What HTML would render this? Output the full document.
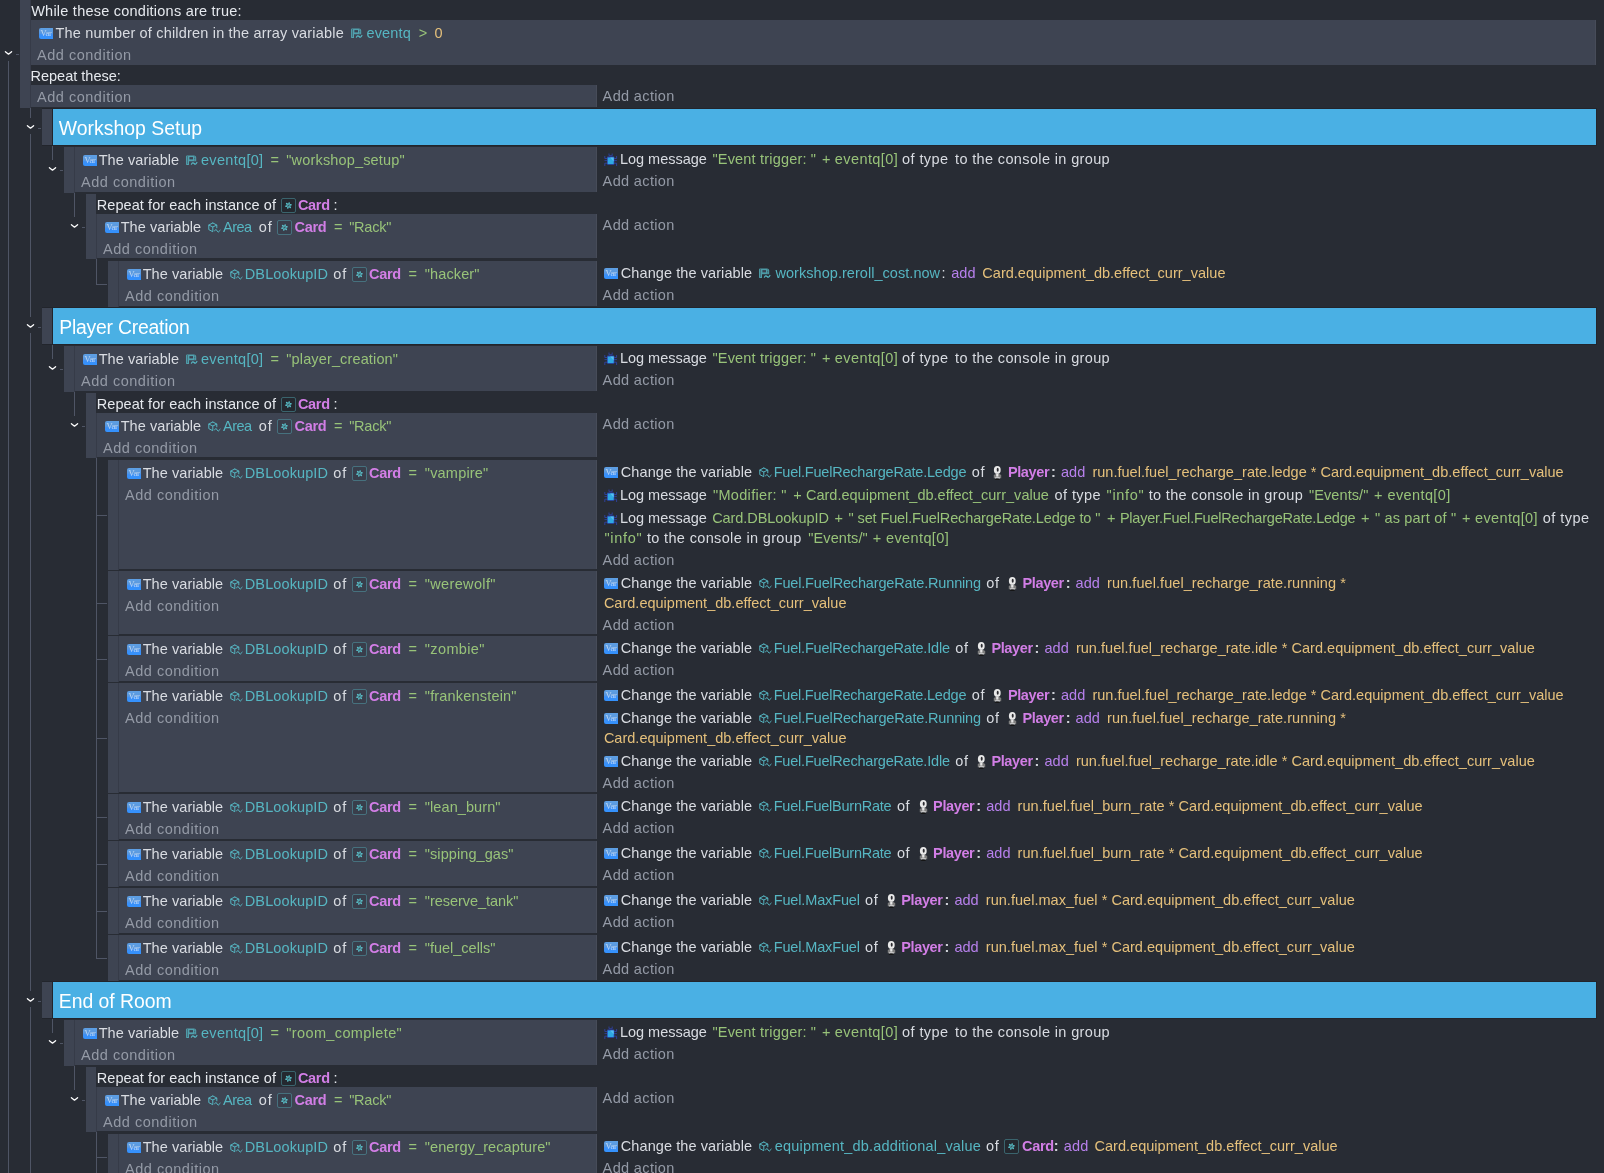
<!DOCTYPE html>
<html lang="en"><head><meta charset="utf-8"><title>Events sheet</title>
<style>
html,body{margin:0;padding:0;background:#282c34;}
#root{will-change:transform;position:relative;width:1604px;height:1173px;overflow:hidden;background:#282c34;font-family:"Liberation Sans", sans-serif;}
#root div{position:absolute;}
.x{position:absolute;white-space:pre;line-height:20px;font-size:14.5px;}
.i{position:absolute;display:block;}
.t{color:#d9dce2;} .tb{color:#cfd2d8;font-weight:700;} .hd{color:#e6e9ee;} .add{color:#949aa6;} .v{color:#56b6c2;}
.s,.o{color:#98c379;} .n{color:#e5c07b;} .op{color:#b780ec;} .obj{color:#d27ee6;font-weight:700;}
.grp{color:#fff;font-size:19.4px;line-height:26px;}
.ivar{position:absolute;width:14px;height:11px;border-radius:2px 0 0 2px;background:linear-gradient(#5d9fe4 0%,#5a98de 45%,#3b8ff6 62%,#3392ff 100%);color:rgba(255,255,255,.62);font:400 8.5px/10px "Liberation Serif",serif;text-align:center;letter-spacing:-0.3px;overflow:hidden;}
</style></head>
<body><div id="root">
<div style="left:20px;top:0px;width:10px;height:108px;background:#3e4452;"></div>
<div style="left:30px;top:0px;width:1px;height:108px;background:#363b48;"></div>
<div style="left:31px;top:20px;width:1565px;height:45px;background:#3e4452;"></div>
<div style="left:1595px;top:20px;width:1px;height:45px;background:#474c59;"></div>
<div style="left:31px;top:85px;width:566px;height:22px;background:#3e4452;"></div>
<div style="left:596px;top:85px;width:1px;height:22px;background:#474c59;"></div>
<div style="left:8px;top:44px;width:1px;height:16px;background:#282c34;"></div>
<div style="left:16px;top:54px;width:3px;height:1px;background:#4f5565;"></div>
<div style="left:8px;top:61px;width:1px;height:1112px;background:#4f5565;"></div>
<div style="left:30px;top:108px;width:1px;height:1065px;background:#4f5565;"></div>
<div style="left:42px;top:109px;width:10px;height:36px;background:#3e4452;"></div>
<div style="left:42px;top:108px;width:1555px;height:38px;background:#22252c;"></div>
<div style="left:42px;top:109px;width:10px;height:36px;background:#3e4452;"></div>
<div style="left:53px;top:109px;width:1543px;height:36px;background:#4ab0e4;"></div>
<div style="left:30px;top:118px;width:1px;height:16px;background:#282c34;"></div>
<div style="left:38px;top:128px;width:3px;height:1px;background:#4f5565;"></div>
<div style="left:52px;top:146px;width:1px;height:15px;background:#4f5565;"></div>
<div style="left:64px;top:147px;width:10px;height:46px;background:#3e4452;"></div>
<div style="left:75px;top:147px;width:522px;height:45px;background:#3e4452;"></div>
<div style="left:596px;top:147px;width:1px;height:45px;background:#474c59;"></div>
<div style="left:74px;top:147px;width:1px;height:46px;background:#363b48;"></div>
<div style="left:52px;top:160px;width:1px;height:16px;background:#282c34;"></div>
<div style="left:60px;top:170px;width:3px;height:1px;background:#4f5565;"></div>
<div style="left:74px;top:193px;width:1px;height:26px;background:#4f5565;"></div>
<div style="left:86px;top:194px;width:10px;height:65px;background:#3e4452;"></div>
<div style="left:96px;top:214px;width:1px;height:45px;background:#363b48;"></div>
<div style="left:97px;top:214px;width:500px;height:44px;background:#3e4452;"></div>
<div style="left:596px;top:214px;width:1px;height:44px;background:#474c59;"></div>
<div style="left:74px;top:217px;width:1px;height:16px;background:#282c34;"></div>
<div style="left:82px;top:227px;width:3px;height:1px;background:#4f5565;"></div>
<div style="left:96px;top:259px;width:1px;height:26px;background:#4f5565;"></div>
<div style="left:96px;top:284px;width:11px;height:1px;background:#4f5565;"></div>
<div style="left:108px;top:261px;width:10px;height:46px;background:#3e4452;"></div>
<div style="left:119px;top:261px;width:478px;height:45px;background:#3e4452;"></div>
<div style="left:596px;top:261px;width:1px;height:45px;background:#474c59;"></div>
<div style="left:118px;top:261px;width:1px;height:46px;background:#363b48;"></div>
<div style="left:42px;top:308px;width:10px;height:36px;background:#3e4452;"></div>
<div style="left:42px;top:307px;width:1555px;height:38px;background:#22252c;"></div>
<div style="left:42px;top:308px;width:10px;height:36px;background:#3e4452;"></div>
<div style="left:53px;top:308px;width:1543px;height:36px;background:#4ab0e4;"></div>
<div style="left:30px;top:317px;width:1px;height:16px;background:#282c34;"></div>
<div style="left:38px;top:327px;width:3px;height:1px;background:#4f5565;"></div>
<div style="left:52px;top:345px;width:1px;height:15px;background:#4f5565;"></div>
<div style="left:64px;top:346px;width:10px;height:46px;background:#3e4452;"></div>
<div style="left:75px;top:346px;width:522px;height:45px;background:#3e4452;"></div>
<div style="left:596px;top:346px;width:1px;height:45px;background:#474c59;"></div>
<div style="left:74px;top:346px;width:1px;height:46px;background:#363b48;"></div>
<div style="left:52px;top:359px;width:1px;height:16px;background:#282c34;"></div>
<div style="left:60px;top:369px;width:3px;height:1px;background:#4f5565;"></div>
<div style="left:74px;top:392px;width:1px;height:26px;background:#4f5565;"></div>
<div style="left:86px;top:393px;width:10px;height:65px;background:#3e4452;"></div>
<div style="left:96px;top:413px;width:1px;height:45px;background:#363b48;"></div>
<div style="left:97px;top:413px;width:500px;height:44px;background:#3e4452;"></div>
<div style="left:596px;top:413px;width:1px;height:44px;background:#474c59;"></div>
<div style="left:74px;top:416px;width:1px;height:16px;background:#282c34;"></div>
<div style="left:82px;top:426px;width:3px;height:1px;background:#4f5565;"></div>
<div style="left:108px;top:460px;width:10px;height:110px;background:#3e4452;"></div>
<div style="left:119px;top:460px;width:478px;height:109px;background:#3e4452;"></div>
<div style="left:596px;top:460px;width:1px;height:109px;background:#474c59;"></div>
<div style="left:118px;top:460px;width:1px;height:110px;background:#363b48;"></div>
<div style="left:96px;top:515px;width:11px;height:1px;background:#4f5565;"></div>
<div style="left:108px;top:571px;width:10px;height:64px;background:#3e4452;"></div>
<div style="left:119px;top:571px;width:478px;height:63px;background:#3e4452;"></div>
<div style="left:596px;top:571px;width:1px;height:63px;background:#474c59;"></div>
<div style="left:118px;top:571px;width:1px;height:64px;background:#363b48;"></div>
<div style="left:96px;top:603px;width:11px;height:1px;background:#4f5565;"></div>
<div style="left:108px;top:636px;width:10px;height:46px;background:#3e4452;"></div>
<div style="left:119px;top:636px;width:478px;height:45px;background:#3e4452;"></div>
<div style="left:596px;top:636px;width:1px;height:45px;background:#474c59;"></div>
<div style="left:118px;top:636px;width:1px;height:46px;background:#363b48;"></div>
<div style="left:96px;top:659px;width:11px;height:1px;background:#4f5565;"></div>
<div style="left:108px;top:683px;width:10px;height:110px;background:#3e4452;"></div>
<div style="left:119px;top:683px;width:478px;height:109px;background:#3e4452;"></div>
<div style="left:596px;top:683px;width:1px;height:109px;background:#474c59;"></div>
<div style="left:118px;top:683px;width:1px;height:110px;background:#363b48;"></div>
<div style="left:96px;top:738px;width:11px;height:1px;background:#4f5565;"></div>
<div style="left:108px;top:794px;width:10px;height:46px;background:#3e4452;"></div>
<div style="left:119px;top:794px;width:478px;height:45px;background:#3e4452;"></div>
<div style="left:596px;top:794px;width:1px;height:45px;background:#474c59;"></div>
<div style="left:118px;top:794px;width:1px;height:46px;background:#363b48;"></div>
<div style="left:96px;top:817px;width:11px;height:1px;background:#4f5565;"></div>
<div style="left:108px;top:841px;width:10px;height:46px;background:#3e4452;"></div>
<div style="left:119px;top:841px;width:478px;height:45px;background:#3e4452;"></div>
<div style="left:596px;top:841px;width:1px;height:45px;background:#474c59;"></div>
<div style="left:118px;top:841px;width:1px;height:46px;background:#363b48;"></div>
<div style="left:96px;top:864px;width:11px;height:1px;background:#4f5565;"></div>
<div style="left:108px;top:888px;width:10px;height:46px;background:#3e4452;"></div>
<div style="left:119px;top:888px;width:478px;height:45px;background:#3e4452;"></div>
<div style="left:596px;top:888px;width:1px;height:45px;background:#474c59;"></div>
<div style="left:118px;top:888px;width:1px;height:46px;background:#363b48;"></div>
<div style="left:96px;top:911px;width:11px;height:1px;background:#4f5565;"></div>
<div style="left:108px;top:935px;width:10px;height:46px;background:#3e4452;"></div>
<div style="left:119px;top:935px;width:478px;height:45px;background:#3e4452;"></div>
<div style="left:596px;top:935px;width:1px;height:45px;background:#474c59;"></div>
<div style="left:118px;top:935px;width:1px;height:46px;background:#363b48;"></div>
<div style="left:96px;top:958px;width:11px;height:1px;background:#4f5565;"></div>
<div style="left:96px;top:458px;width:1px;height:500px;background:#4f5565;"></div>
<div style="left:42px;top:982px;width:10px;height:36px;background:#3e4452;"></div>
<div style="left:42px;top:981px;width:1555px;height:38px;background:#22252c;"></div>
<div style="left:42px;top:982px;width:10px;height:36px;background:#3e4452;"></div>
<div style="left:53px;top:982px;width:1543px;height:36px;background:#4ab0e4;"></div>
<div style="left:30px;top:991px;width:1px;height:16px;background:#282c34;"></div>
<div style="left:38px;top:1001px;width:3px;height:1px;background:#4f5565;"></div>
<div style="left:52px;top:1019px;width:1px;height:15px;background:#4f5565;"></div>
<div style="left:64px;top:1020px;width:10px;height:46px;background:#3e4452;"></div>
<div style="left:75px;top:1020px;width:522px;height:45px;background:#3e4452;"></div>
<div style="left:596px;top:1020px;width:1px;height:45px;background:#474c59;"></div>
<div style="left:74px;top:1020px;width:1px;height:46px;background:#363b48;"></div>
<div style="left:52px;top:1033px;width:1px;height:16px;background:#282c34;"></div>
<div style="left:60px;top:1043px;width:3px;height:1px;background:#4f5565;"></div>
<div style="left:74px;top:1066px;width:1px;height:26px;background:#4f5565;"></div>
<div style="left:86px;top:1067px;width:10px;height:65px;background:#3e4452;"></div>
<div style="left:96px;top:1087px;width:1px;height:45px;background:#363b48;"></div>
<div style="left:97px;top:1087px;width:500px;height:44px;background:#3e4452;"></div>
<div style="left:596px;top:1087px;width:1px;height:44px;background:#474c59;"></div>
<div style="left:74px;top:1090px;width:1px;height:16px;background:#282c34;"></div>
<div style="left:82px;top:1100px;width:3px;height:1px;background:#4f5565;"></div>
<div style="left:108px;top:1134px;width:10px;height:46px;background:#3e4452;"></div>
<div style="left:119px;top:1134px;width:478px;height:45px;background:#3e4452;"></div>
<div style="left:596px;top:1134px;width:1px;height:45px;background:#474c59;"></div>
<div style="left:118px;top:1134px;width:1px;height:46px;background:#363b48;"></div>
<div style="left:96px;top:1132px;width:1px;height:60px;background:#4f5565;"></div>
<div style="left:96px;top:1157px;width:11px;height:1px;background:#4f5565;"></div>
<span class="ivar" style="left:39px;top:28px">Var</span>
<svg class="i" style="left:351px;top:27.5px" width="12" height="11" viewBox="0 0 12 11"><path d="M1.2 0.4h6.8a2.2 2.2 0 0 1 2.2 2.2v3.6h-7.2v3.9h-1.8a1.2 1.2 0 0 1-1.2-1.2v-7.3a1.2 1.2 0 0 1 1.2-1.2z" fill="#56b6c2" opacity="0.82"/><rect x="3.4" y="2.1" width="3.6" height="2.3" fill="#3a4150"/><rect x="0.9" y="1.5" width="1" height="1" fill="#353b49"/><rect x="0.9" y="3.5" width="1" height="1" fill="#353b49"/><rect x="0.9" y="5.5" width="1" height="1" fill="#353b49"/><rect x="0.9" y="7.5" width="1" height="1" fill="#353b49"/><rect x="8.3" y="1.6" width="0.9" height="0.8" fill="#3a4150"/><rect x="8.3" y="3.2" width="0.9" height="0.8" fill="#3a4150"/><rect x="8.3" y="4.6" width="0.9" height="0.8" fill="#3a4150"/><path d="M5.4 9.2 q1.3-2.4 2.7-0.7 t2.8-1.0" fill="none" stroke="#56b6c2" stroke-width="1.2" stroke-linecap="round"/></svg>
<svg class="i" style="left:2.5999999999999996px;top:49.1px" width="11" height="8" viewBox="0 0 11 8"><path d="M2.4 2.7 L5.5 5.2 L8.6 2.7" fill="none" stroke="#fff" stroke-width="1.3" stroke-linecap="round" stroke-linejoin="round"/></svg>
<svg class="i" style="left:24.6px;top:123.1px" width="11" height="8" viewBox="0 0 11 8"><path d="M2.4 2.7 L5.5 5.2 L8.6 2.7" fill="none" stroke="#fff" stroke-width="1.3" stroke-linecap="round" stroke-linejoin="round"/></svg>
<span class="ivar" style="left:83px;top:155px">Var</span>
<svg class="i" style="left:185.8px;top:154.5px" width="12" height="11" viewBox="0 0 12 11"><path d="M1.2 0.4h6.8a2.2 2.2 0 0 1 2.2 2.2v3.6h-7.2v3.9h-1.8a1.2 1.2 0 0 1-1.2-1.2v-7.3a1.2 1.2 0 0 1 1.2-1.2z" fill="#56b6c2" opacity="0.82"/><rect x="3.4" y="2.1" width="3.6" height="2.3" fill="#3a4150"/><rect x="0.9" y="1.5" width="1" height="1" fill="#353b49"/><rect x="0.9" y="3.5" width="1" height="1" fill="#353b49"/><rect x="0.9" y="5.5" width="1" height="1" fill="#353b49"/><rect x="0.9" y="7.5" width="1" height="1" fill="#353b49"/><rect x="8.3" y="1.6" width="0.9" height="0.8" fill="#3a4150"/><rect x="8.3" y="3.2" width="0.9" height="0.8" fill="#3a4150"/><rect x="8.3" y="4.6" width="0.9" height="0.8" fill="#3a4150"/><path d="M5.4 9.2 q1.3-2.4 2.7-0.7 t2.8-1.0" fill="none" stroke="#56b6c2" stroke-width="1.2" stroke-linecap="round"/></svg>
<svg class="i" style="left:604px;top:153px" width="14" height="14" viewBox="0 0 14 14"><path d="M5 0.5v2.2h3.2V0.5 M0.8 3v2.5h2.6 M12.6 3v2.5h-2.6 M0.5 7.6h3 M12.9 7.6h-3 M0.8 13v-2.8h2.6 M12.6 13v-2.8h-2.6" fill="none" stroke="#3144ae" stroke-width="0.95" opacity="0.85"/><rect x="3" y="3.6" width="7.4" height="8.2" rx="0.8" fill="#2a3fae"/><rect x="3.7" y="4.5" width="6" height="6.6" fill="#2fa9e2"/><path d="M6.2 4.5h3.5v4z" fill="#58bff0"/></svg>
<svg class="i" style="left:46.6px;top:165.1px" width="11" height="8" viewBox="0 0 11 8"><path d="M2.4 2.7 L5.5 5.2 L8.6 2.7" fill="none" stroke="#fff" stroke-width="1.3" stroke-linecap="round" stroke-linejoin="round"/></svg>
<svg class="i" style="left:281px;top:198px" width="15" height="15" viewBox="0 0 15 15"><rect x="0.5" y="0.5" width="14" height="14" rx="1.5" fill="rgba(0,0,0,0.08)" stroke="rgba(86,182,194,0.42)" stroke-width="1"/><ellipse cx="7.5" cy="5.3" rx="0.85" ry="1.2" fill="#5ccbd4" opacity="0.92" transform="rotate(15 7.5 7.5)"/><ellipse cx="7.5" cy="5.3" rx="0.85" ry="1.2" fill="#5ccbd4" opacity="0.92" transform="rotate(75 7.5 7.5)"/><ellipse cx="7.5" cy="5.3" rx="0.85" ry="1.2" fill="#5ccbd4" opacity="0.92" transform="rotate(135 7.5 7.5)"/><ellipse cx="7.5" cy="5.3" rx="0.85" ry="1.2" fill="#5ccbd4" opacity="0.92" transform="rotate(195 7.5 7.5)"/><ellipse cx="7.5" cy="5.3" rx="0.85" ry="1.2" fill="#5ccbd4" opacity="0.92" transform="rotate(255 7.5 7.5)"/><ellipse cx="7.5" cy="5.3" rx="0.85" ry="1.2" fill="#5ccbd4" opacity="0.92" transform="rotate(315 7.5 7.5)"/><circle cx="7.5" cy="7.5" r="1.4" fill="#4fa3ad"/><circle cx="7.5" cy="7.5" r="0.8" fill="#3f5560"/></svg>
<span class="ivar" style="left:105px;top:222px">Var</span>
<svg class="i" style="left:207.8px;top:222px" width="13" height="11" viewBox="0 0 13 11"><path d="M4.8 1 L8.8 3 L8.8 5.8 M4.8 1 L0.8 3 L0.8 7.6 L4.6 9.6 M0.9 3.1 L4.8 5 L8.7 3.1 M4.8 5 L4.8 8.6" fill="none" stroke="#56b6c2" stroke-width="1" stroke-linejoin="round" stroke-linecap="round"/><path d="M6.4 9.1 L7.9 7.4 L10.2 10.2 L12.2 8.2" fill="none" stroke="#56b6c2" stroke-width="1" stroke-linecap="round" stroke-linejoin="round"/></svg>
<svg class="i" style="left:277.3px;top:220px" width="15" height="15" viewBox="0 0 15 15"><rect x="0.5" y="0.5" width="14" height="14" rx="1.5" fill="rgba(0,0,0,0.08)" stroke="rgba(86,182,194,0.42)" stroke-width="1"/><ellipse cx="7.5" cy="5.3" rx="0.85" ry="1.2" fill="#5ccbd4" opacity="0.92" transform="rotate(15 7.5 7.5)"/><ellipse cx="7.5" cy="5.3" rx="0.85" ry="1.2" fill="#5ccbd4" opacity="0.92" transform="rotate(75 7.5 7.5)"/><ellipse cx="7.5" cy="5.3" rx="0.85" ry="1.2" fill="#5ccbd4" opacity="0.92" transform="rotate(135 7.5 7.5)"/><ellipse cx="7.5" cy="5.3" rx="0.85" ry="1.2" fill="#5ccbd4" opacity="0.92" transform="rotate(195 7.5 7.5)"/><ellipse cx="7.5" cy="5.3" rx="0.85" ry="1.2" fill="#5ccbd4" opacity="0.92" transform="rotate(255 7.5 7.5)"/><ellipse cx="7.5" cy="5.3" rx="0.85" ry="1.2" fill="#5ccbd4" opacity="0.92" transform="rotate(315 7.5 7.5)"/><circle cx="7.5" cy="7.5" r="1.4" fill="#4fa3ad"/><circle cx="7.5" cy="7.5" r="0.8" fill="#3f5560"/></svg>
<svg class="i" style="left:68.6px;top:222.1px" width="11" height="8" viewBox="0 0 11 8"><path d="M2.4 2.7 L5.5 5.2 L8.6 2.7" fill="none" stroke="#fff" stroke-width="1.3" stroke-linecap="round" stroke-linejoin="round"/></svg>
<span class="ivar" style="left:127px;top:269px">Var</span>
<svg class="i" style="left:229.8px;top:269px" width="13" height="11" viewBox="0 0 13 11"><path d="M4.8 1 L8.8 3 L8.8 5.8 M4.8 1 L0.8 3 L0.8 7.6 L4.6 9.6 M0.9 3.1 L4.8 5 L8.7 3.1 M4.8 5 L4.8 8.6" fill="none" stroke="#56b6c2" stroke-width="1" stroke-linejoin="round" stroke-linecap="round"/><path d="M6.4 9.1 L7.9 7.4 L10.2 10.2 L12.2 8.2" fill="none" stroke="#56b6c2" stroke-width="1" stroke-linecap="round" stroke-linejoin="round"/></svg>
<svg class="i" style="left:351.8px;top:267px" width="15" height="15" viewBox="0 0 15 15"><rect x="0.5" y="0.5" width="14" height="14" rx="1.5" fill="rgba(0,0,0,0.08)" stroke="rgba(86,182,194,0.42)" stroke-width="1"/><ellipse cx="7.5" cy="5.3" rx="0.85" ry="1.2" fill="#5ccbd4" opacity="0.92" transform="rotate(15 7.5 7.5)"/><ellipse cx="7.5" cy="5.3" rx="0.85" ry="1.2" fill="#5ccbd4" opacity="0.92" transform="rotate(75 7.5 7.5)"/><ellipse cx="7.5" cy="5.3" rx="0.85" ry="1.2" fill="#5ccbd4" opacity="0.92" transform="rotate(135 7.5 7.5)"/><ellipse cx="7.5" cy="5.3" rx="0.85" ry="1.2" fill="#5ccbd4" opacity="0.92" transform="rotate(195 7.5 7.5)"/><ellipse cx="7.5" cy="5.3" rx="0.85" ry="1.2" fill="#5ccbd4" opacity="0.92" transform="rotate(255 7.5 7.5)"/><ellipse cx="7.5" cy="5.3" rx="0.85" ry="1.2" fill="#5ccbd4" opacity="0.92" transform="rotate(315 7.5 7.5)"/><circle cx="7.5" cy="7.5" r="1.4" fill="#4fa3ad"/><circle cx="7.5" cy="7.5" r="0.8" fill="#3f5560"/></svg>
<span class="ivar" style="left:604px;top:268px">Var</span>
<svg class="i" style="left:759px;top:267.5px" width="12" height="11" viewBox="0 0 12 11"><path d="M1.2 0.4h6.8a2.2 2.2 0 0 1 2.2 2.2v3.6h-7.2v3.9h-1.8a1.2 1.2 0 0 1-1.2-1.2v-7.3a1.2 1.2 0 0 1 1.2-1.2z" fill="#56b6c2" opacity="0.82"/><rect x="3.4" y="2.1" width="3.6" height="2.3" fill="#3a4150"/><rect x="0.9" y="1.5" width="1" height="1" fill="#353b49"/><rect x="0.9" y="3.5" width="1" height="1" fill="#353b49"/><rect x="0.9" y="5.5" width="1" height="1" fill="#353b49"/><rect x="0.9" y="7.5" width="1" height="1" fill="#353b49"/><rect x="8.3" y="1.6" width="0.9" height="0.8" fill="#3a4150"/><rect x="8.3" y="3.2" width="0.9" height="0.8" fill="#3a4150"/><rect x="8.3" y="4.6" width="0.9" height="0.8" fill="#3a4150"/><path d="M5.4 9.2 q1.3-2.4 2.7-0.7 t2.8-1.0" fill="none" stroke="#56b6c2" stroke-width="1.2" stroke-linecap="round"/></svg>
<svg class="i" style="left:24.6px;top:322.1px" width="11" height="8" viewBox="0 0 11 8"><path d="M2.4 2.7 L5.5 5.2 L8.6 2.7" fill="none" stroke="#fff" stroke-width="1.3" stroke-linecap="round" stroke-linejoin="round"/></svg>
<span class="ivar" style="left:83px;top:354px">Var</span>
<svg class="i" style="left:185.8px;top:353.5px" width="12" height="11" viewBox="0 0 12 11"><path d="M1.2 0.4h6.8a2.2 2.2 0 0 1 2.2 2.2v3.6h-7.2v3.9h-1.8a1.2 1.2 0 0 1-1.2-1.2v-7.3a1.2 1.2 0 0 1 1.2-1.2z" fill="#56b6c2" opacity="0.82"/><rect x="3.4" y="2.1" width="3.6" height="2.3" fill="#3a4150"/><rect x="0.9" y="1.5" width="1" height="1" fill="#353b49"/><rect x="0.9" y="3.5" width="1" height="1" fill="#353b49"/><rect x="0.9" y="5.5" width="1" height="1" fill="#353b49"/><rect x="0.9" y="7.5" width="1" height="1" fill="#353b49"/><rect x="8.3" y="1.6" width="0.9" height="0.8" fill="#3a4150"/><rect x="8.3" y="3.2" width="0.9" height="0.8" fill="#3a4150"/><rect x="8.3" y="4.6" width="0.9" height="0.8" fill="#3a4150"/><path d="M5.4 9.2 q1.3-2.4 2.7-0.7 t2.8-1.0" fill="none" stroke="#56b6c2" stroke-width="1.2" stroke-linecap="round"/></svg>
<svg class="i" style="left:604px;top:352px" width="14" height="14" viewBox="0 0 14 14"><path d="M5 0.5v2.2h3.2V0.5 M0.8 3v2.5h2.6 M12.6 3v2.5h-2.6 M0.5 7.6h3 M12.9 7.6h-3 M0.8 13v-2.8h2.6 M12.6 13v-2.8h-2.6" fill="none" stroke="#3144ae" stroke-width="0.95" opacity="0.85"/><rect x="3" y="3.6" width="7.4" height="8.2" rx="0.8" fill="#2a3fae"/><rect x="3.7" y="4.5" width="6" height="6.6" fill="#2fa9e2"/><path d="M6.2 4.5h3.5v4z" fill="#58bff0"/></svg>
<svg class="i" style="left:46.6px;top:364.1px" width="11" height="8" viewBox="0 0 11 8"><path d="M2.4 2.7 L5.5 5.2 L8.6 2.7" fill="none" stroke="#fff" stroke-width="1.3" stroke-linecap="round" stroke-linejoin="round"/></svg>
<svg class="i" style="left:281px;top:397px" width="15" height="15" viewBox="0 0 15 15"><rect x="0.5" y="0.5" width="14" height="14" rx="1.5" fill="rgba(0,0,0,0.08)" stroke="rgba(86,182,194,0.42)" stroke-width="1"/><ellipse cx="7.5" cy="5.3" rx="0.85" ry="1.2" fill="#5ccbd4" opacity="0.92" transform="rotate(15 7.5 7.5)"/><ellipse cx="7.5" cy="5.3" rx="0.85" ry="1.2" fill="#5ccbd4" opacity="0.92" transform="rotate(75 7.5 7.5)"/><ellipse cx="7.5" cy="5.3" rx="0.85" ry="1.2" fill="#5ccbd4" opacity="0.92" transform="rotate(135 7.5 7.5)"/><ellipse cx="7.5" cy="5.3" rx="0.85" ry="1.2" fill="#5ccbd4" opacity="0.92" transform="rotate(195 7.5 7.5)"/><ellipse cx="7.5" cy="5.3" rx="0.85" ry="1.2" fill="#5ccbd4" opacity="0.92" transform="rotate(255 7.5 7.5)"/><ellipse cx="7.5" cy="5.3" rx="0.85" ry="1.2" fill="#5ccbd4" opacity="0.92" transform="rotate(315 7.5 7.5)"/><circle cx="7.5" cy="7.5" r="1.4" fill="#4fa3ad"/><circle cx="7.5" cy="7.5" r="0.8" fill="#3f5560"/></svg>
<span class="ivar" style="left:105px;top:421px">Var</span>
<svg class="i" style="left:207.8px;top:421px" width="13" height="11" viewBox="0 0 13 11"><path d="M4.8 1 L8.8 3 L8.8 5.8 M4.8 1 L0.8 3 L0.8 7.6 L4.6 9.6 M0.9 3.1 L4.8 5 L8.7 3.1 M4.8 5 L4.8 8.6" fill="none" stroke="#56b6c2" stroke-width="1" stroke-linejoin="round" stroke-linecap="round"/><path d="M6.4 9.1 L7.9 7.4 L10.2 10.2 L12.2 8.2" fill="none" stroke="#56b6c2" stroke-width="1" stroke-linecap="round" stroke-linejoin="round"/></svg>
<svg class="i" style="left:277.3px;top:419px" width="15" height="15" viewBox="0 0 15 15"><rect x="0.5" y="0.5" width="14" height="14" rx="1.5" fill="rgba(0,0,0,0.08)" stroke="rgba(86,182,194,0.42)" stroke-width="1"/><ellipse cx="7.5" cy="5.3" rx="0.85" ry="1.2" fill="#5ccbd4" opacity="0.92" transform="rotate(15 7.5 7.5)"/><ellipse cx="7.5" cy="5.3" rx="0.85" ry="1.2" fill="#5ccbd4" opacity="0.92" transform="rotate(75 7.5 7.5)"/><ellipse cx="7.5" cy="5.3" rx="0.85" ry="1.2" fill="#5ccbd4" opacity="0.92" transform="rotate(135 7.5 7.5)"/><ellipse cx="7.5" cy="5.3" rx="0.85" ry="1.2" fill="#5ccbd4" opacity="0.92" transform="rotate(195 7.5 7.5)"/><ellipse cx="7.5" cy="5.3" rx="0.85" ry="1.2" fill="#5ccbd4" opacity="0.92" transform="rotate(255 7.5 7.5)"/><ellipse cx="7.5" cy="5.3" rx="0.85" ry="1.2" fill="#5ccbd4" opacity="0.92" transform="rotate(315 7.5 7.5)"/><circle cx="7.5" cy="7.5" r="1.4" fill="#4fa3ad"/><circle cx="7.5" cy="7.5" r="0.8" fill="#3f5560"/></svg>
<svg class="i" style="left:68.6px;top:421.1px" width="11" height="8" viewBox="0 0 11 8"><path d="M2.4 2.7 L5.5 5.2 L8.6 2.7" fill="none" stroke="#fff" stroke-width="1.3" stroke-linecap="round" stroke-linejoin="round"/></svg>
<span class="ivar" style="left:127px;top:468px">Var</span>
<svg class="i" style="left:229.8px;top:468px" width="13" height="11" viewBox="0 0 13 11"><path d="M4.8 1 L8.8 3 L8.8 5.8 M4.8 1 L0.8 3 L0.8 7.6 L4.6 9.6 M0.9 3.1 L4.8 5 L8.7 3.1 M4.8 5 L4.8 8.6" fill="none" stroke="#56b6c2" stroke-width="1" stroke-linejoin="round" stroke-linecap="round"/><path d="M6.4 9.1 L7.9 7.4 L10.2 10.2 L12.2 8.2" fill="none" stroke="#56b6c2" stroke-width="1" stroke-linecap="round" stroke-linejoin="round"/></svg>
<svg class="i" style="left:351.8px;top:466px" width="15" height="15" viewBox="0 0 15 15"><rect x="0.5" y="0.5" width="14" height="14" rx="1.5" fill="rgba(0,0,0,0.08)" stroke="rgba(86,182,194,0.42)" stroke-width="1"/><ellipse cx="7.5" cy="5.3" rx="0.85" ry="1.2" fill="#5ccbd4" opacity="0.92" transform="rotate(15 7.5 7.5)"/><ellipse cx="7.5" cy="5.3" rx="0.85" ry="1.2" fill="#5ccbd4" opacity="0.92" transform="rotate(75 7.5 7.5)"/><ellipse cx="7.5" cy="5.3" rx="0.85" ry="1.2" fill="#5ccbd4" opacity="0.92" transform="rotate(135 7.5 7.5)"/><ellipse cx="7.5" cy="5.3" rx="0.85" ry="1.2" fill="#5ccbd4" opacity="0.92" transform="rotate(195 7.5 7.5)"/><ellipse cx="7.5" cy="5.3" rx="0.85" ry="1.2" fill="#5ccbd4" opacity="0.92" transform="rotate(255 7.5 7.5)"/><ellipse cx="7.5" cy="5.3" rx="0.85" ry="1.2" fill="#5ccbd4" opacity="0.92" transform="rotate(315 7.5 7.5)"/><circle cx="7.5" cy="7.5" r="1.4" fill="#4fa3ad"/><circle cx="7.5" cy="7.5" r="0.8" fill="#3f5560"/></svg>
<span class="ivar" style="left:604px;top:467px">Var</span>
<svg class="i" style="left:759px;top:467px" width="13" height="11" viewBox="0 0 13 11"><path d="M4.8 1 L8.8 3 L8.8 5.8 M4.8 1 L0.8 3 L0.8 7.6 L4.6 9.6 M0.9 3.1 L4.8 5 L8.7 3.1 M4.8 5 L4.8 8.6" fill="none" stroke="#56b6c2" stroke-width="1" stroke-linejoin="round" stroke-linecap="round"/><path d="M6.4 9.1 L7.9 7.4 L10.2 10.2 L12.2 8.2" fill="none" stroke="#56b6c2" stroke-width="1" stroke-linecap="round" stroke-linejoin="round"/></svg>
<svg class="i" style="left:993.4px;top:466px" width="9" height="14" viewBox="0 0 9 14"><ellipse cx="4.3" cy="3.9" rx="3.4" ry="3.9" fill="#e9e9e9"/><ellipse cx="4.7" cy="3.7" rx="1.0" ry="2.0" fill="#2b2b30"/><path d="M0.8 9 q3.6-2.6 7.4 0 v3.2 h-7.4z" fill="#7e7e7e"/><rect x="3.2" y="7.4" width="2.2" height="3.2" fill="#e6e6e6"/><rect x="2.2" y="11.2" width="4.6" height="1.3" fill="#d8d8d8"/><path d="M1.4 14 l1.8-1.5 h2.2 l1.8 1.5z" fill="#151515"/></svg>
<svg class="i" style="left:604px;top:489px" width="14" height="14" viewBox="0 0 14 14"><path d="M5 0.5v2.2h3.2V0.5 M0.8 3v2.5h2.6 M12.6 3v2.5h-2.6 M0.5 7.6h3 M12.9 7.6h-3 M0.8 13v-2.8h2.6 M12.6 13v-2.8h-2.6" fill="none" stroke="#3144ae" stroke-width="0.95" opacity="0.85"/><rect x="3" y="3.6" width="7.4" height="8.2" rx="0.8" fill="#2a3fae"/><rect x="3.7" y="4.5" width="6" height="6.6" fill="#2fa9e2"/><path d="M6.2 4.5h3.5v4z" fill="#58bff0"/></svg>
<svg class="i" style="left:604px;top:512px" width="14" height="14" viewBox="0 0 14 14"><path d="M5 0.5v2.2h3.2V0.5 M0.8 3v2.5h2.6 M12.6 3v2.5h-2.6 M0.5 7.6h3 M12.9 7.6h-3 M0.8 13v-2.8h2.6 M12.6 13v-2.8h-2.6" fill="none" stroke="#3144ae" stroke-width="0.95" opacity="0.85"/><rect x="3" y="3.6" width="7.4" height="8.2" rx="0.8" fill="#2a3fae"/><rect x="3.7" y="4.5" width="6" height="6.6" fill="#2fa9e2"/><path d="M6.2 4.5h3.5v4z" fill="#58bff0"/></svg>
<span class="ivar" style="left:127px;top:579px">Var</span>
<svg class="i" style="left:229.8px;top:579px" width="13" height="11" viewBox="0 0 13 11"><path d="M4.8 1 L8.8 3 L8.8 5.8 M4.8 1 L0.8 3 L0.8 7.6 L4.6 9.6 M0.9 3.1 L4.8 5 L8.7 3.1 M4.8 5 L4.8 8.6" fill="none" stroke="#56b6c2" stroke-width="1" stroke-linejoin="round" stroke-linecap="round"/><path d="M6.4 9.1 L7.9 7.4 L10.2 10.2 L12.2 8.2" fill="none" stroke="#56b6c2" stroke-width="1" stroke-linecap="round" stroke-linejoin="round"/></svg>
<svg class="i" style="left:351.8px;top:577px" width="15" height="15" viewBox="0 0 15 15"><rect x="0.5" y="0.5" width="14" height="14" rx="1.5" fill="rgba(0,0,0,0.08)" stroke="rgba(86,182,194,0.42)" stroke-width="1"/><ellipse cx="7.5" cy="5.3" rx="0.85" ry="1.2" fill="#5ccbd4" opacity="0.92" transform="rotate(15 7.5 7.5)"/><ellipse cx="7.5" cy="5.3" rx="0.85" ry="1.2" fill="#5ccbd4" opacity="0.92" transform="rotate(75 7.5 7.5)"/><ellipse cx="7.5" cy="5.3" rx="0.85" ry="1.2" fill="#5ccbd4" opacity="0.92" transform="rotate(135 7.5 7.5)"/><ellipse cx="7.5" cy="5.3" rx="0.85" ry="1.2" fill="#5ccbd4" opacity="0.92" transform="rotate(195 7.5 7.5)"/><ellipse cx="7.5" cy="5.3" rx="0.85" ry="1.2" fill="#5ccbd4" opacity="0.92" transform="rotate(255 7.5 7.5)"/><ellipse cx="7.5" cy="5.3" rx="0.85" ry="1.2" fill="#5ccbd4" opacity="0.92" transform="rotate(315 7.5 7.5)"/><circle cx="7.5" cy="7.5" r="1.4" fill="#4fa3ad"/><circle cx="7.5" cy="7.5" r="0.8" fill="#3f5560"/></svg>
<span class="ivar" style="left:604px;top:578px">Var</span>
<svg class="i" style="left:759px;top:578px" width="13" height="11" viewBox="0 0 13 11"><path d="M4.8 1 L8.8 3 L8.8 5.8 M4.8 1 L0.8 3 L0.8 7.6 L4.6 9.6 M0.9 3.1 L4.8 5 L8.7 3.1 M4.8 5 L4.8 8.6" fill="none" stroke="#56b6c2" stroke-width="1" stroke-linejoin="round" stroke-linecap="round"/><path d="M6.4 9.1 L7.9 7.4 L10.2 10.2 L12.2 8.2" fill="none" stroke="#56b6c2" stroke-width="1" stroke-linecap="round" stroke-linejoin="round"/></svg>
<svg class="i" style="left:1008.0px;top:577px" width="9" height="14" viewBox="0 0 9 14"><ellipse cx="4.3" cy="3.9" rx="3.4" ry="3.9" fill="#e9e9e9"/><ellipse cx="4.7" cy="3.7" rx="1.0" ry="2.0" fill="#2b2b30"/><path d="M0.8 9 q3.6-2.6 7.4 0 v3.2 h-7.4z" fill="#7e7e7e"/><rect x="3.2" y="7.4" width="2.2" height="3.2" fill="#e6e6e6"/><rect x="2.2" y="11.2" width="4.6" height="1.3" fill="#d8d8d8"/><path d="M1.4 14 l1.8-1.5 h2.2 l1.8 1.5z" fill="#151515"/></svg>
<span class="ivar" style="left:127px;top:644px">Var</span>
<svg class="i" style="left:229.8px;top:644px" width="13" height="11" viewBox="0 0 13 11"><path d="M4.8 1 L8.8 3 L8.8 5.8 M4.8 1 L0.8 3 L0.8 7.6 L4.6 9.6 M0.9 3.1 L4.8 5 L8.7 3.1 M4.8 5 L4.8 8.6" fill="none" stroke="#56b6c2" stroke-width="1" stroke-linejoin="round" stroke-linecap="round"/><path d="M6.4 9.1 L7.9 7.4 L10.2 10.2 L12.2 8.2" fill="none" stroke="#56b6c2" stroke-width="1" stroke-linecap="round" stroke-linejoin="round"/></svg>
<svg class="i" style="left:351.8px;top:642px" width="15" height="15" viewBox="0 0 15 15"><rect x="0.5" y="0.5" width="14" height="14" rx="1.5" fill="rgba(0,0,0,0.08)" stroke="rgba(86,182,194,0.42)" stroke-width="1"/><ellipse cx="7.5" cy="5.3" rx="0.85" ry="1.2" fill="#5ccbd4" opacity="0.92" transform="rotate(15 7.5 7.5)"/><ellipse cx="7.5" cy="5.3" rx="0.85" ry="1.2" fill="#5ccbd4" opacity="0.92" transform="rotate(75 7.5 7.5)"/><ellipse cx="7.5" cy="5.3" rx="0.85" ry="1.2" fill="#5ccbd4" opacity="0.92" transform="rotate(135 7.5 7.5)"/><ellipse cx="7.5" cy="5.3" rx="0.85" ry="1.2" fill="#5ccbd4" opacity="0.92" transform="rotate(195 7.5 7.5)"/><ellipse cx="7.5" cy="5.3" rx="0.85" ry="1.2" fill="#5ccbd4" opacity="0.92" transform="rotate(255 7.5 7.5)"/><ellipse cx="7.5" cy="5.3" rx="0.85" ry="1.2" fill="#5ccbd4" opacity="0.92" transform="rotate(315 7.5 7.5)"/><circle cx="7.5" cy="7.5" r="1.4" fill="#4fa3ad"/><circle cx="7.5" cy="7.5" r="0.8" fill="#3f5560"/></svg>
<span class="ivar" style="left:604px;top:643px">Var</span>
<svg class="i" style="left:759px;top:643px" width="13" height="11" viewBox="0 0 13 11"><path d="M4.8 1 L8.8 3 L8.8 5.8 M4.8 1 L0.8 3 L0.8 7.6 L4.6 9.6 M0.9 3.1 L4.8 5 L8.7 3.1 M4.8 5 L4.8 8.6" fill="none" stroke="#56b6c2" stroke-width="1" stroke-linejoin="round" stroke-linecap="round"/><path d="M6.4 9.1 L7.9 7.4 L10.2 10.2 L12.2 8.2" fill="none" stroke="#56b6c2" stroke-width="1" stroke-linecap="round" stroke-linejoin="round"/></svg>
<svg class="i" style="left:976.9px;top:642px" width="9" height="14" viewBox="0 0 9 14"><ellipse cx="4.3" cy="3.9" rx="3.4" ry="3.9" fill="#e9e9e9"/><ellipse cx="4.7" cy="3.7" rx="1.0" ry="2.0" fill="#2b2b30"/><path d="M0.8 9 q3.6-2.6 7.4 0 v3.2 h-7.4z" fill="#7e7e7e"/><rect x="3.2" y="7.4" width="2.2" height="3.2" fill="#e6e6e6"/><rect x="2.2" y="11.2" width="4.6" height="1.3" fill="#d8d8d8"/><path d="M1.4 14 l1.8-1.5 h2.2 l1.8 1.5z" fill="#151515"/></svg>
<span class="ivar" style="left:127px;top:691px">Var</span>
<svg class="i" style="left:229.8px;top:691px" width="13" height="11" viewBox="0 0 13 11"><path d="M4.8 1 L8.8 3 L8.8 5.8 M4.8 1 L0.8 3 L0.8 7.6 L4.6 9.6 M0.9 3.1 L4.8 5 L8.7 3.1 M4.8 5 L4.8 8.6" fill="none" stroke="#56b6c2" stroke-width="1" stroke-linejoin="round" stroke-linecap="round"/><path d="M6.4 9.1 L7.9 7.4 L10.2 10.2 L12.2 8.2" fill="none" stroke="#56b6c2" stroke-width="1" stroke-linecap="round" stroke-linejoin="round"/></svg>
<svg class="i" style="left:351.8px;top:689px" width="15" height="15" viewBox="0 0 15 15"><rect x="0.5" y="0.5" width="14" height="14" rx="1.5" fill="rgba(0,0,0,0.08)" stroke="rgba(86,182,194,0.42)" stroke-width="1"/><ellipse cx="7.5" cy="5.3" rx="0.85" ry="1.2" fill="#5ccbd4" opacity="0.92" transform="rotate(15 7.5 7.5)"/><ellipse cx="7.5" cy="5.3" rx="0.85" ry="1.2" fill="#5ccbd4" opacity="0.92" transform="rotate(75 7.5 7.5)"/><ellipse cx="7.5" cy="5.3" rx="0.85" ry="1.2" fill="#5ccbd4" opacity="0.92" transform="rotate(135 7.5 7.5)"/><ellipse cx="7.5" cy="5.3" rx="0.85" ry="1.2" fill="#5ccbd4" opacity="0.92" transform="rotate(195 7.5 7.5)"/><ellipse cx="7.5" cy="5.3" rx="0.85" ry="1.2" fill="#5ccbd4" opacity="0.92" transform="rotate(255 7.5 7.5)"/><ellipse cx="7.5" cy="5.3" rx="0.85" ry="1.2" fill="#5ccbd4" opacity="0.92" transform="rotate(315 7.5 7.5)"/><circle cx="7.5" cy="7.5" r="1.4" fill="#4fa3ad"/><circle cx="7.5" cy="7.5" r="0.8" fill="#3f5560"/></svg>
<span class="ivar" style="left:604px;top:690px">Var</span>
<svg class="i" style="left:759px;top:690px" width="13" height="11" viewBox="0 0 13 11"><path d="M4.8 1 L8.8 3 L8.8 5.8 M4.8 1 L0.8 3 L0.8 7.6 L4.6 9.6 M0.9 3.1 L4.8 5 L8.7 3.1 M4.8 5 L4.8 8.6" fill="none" stroke="#56b6c2" stroke-width="1" stroke-linejoin="round" stroke-linecap="round"/><path d="M6.4 9.1 L7.9 7.4 L10.2 10.2 L12.2 8.2" fill="none" stroke="#56b6c2" stroke-width="1" stroke-linecap="round" stroke-linejoin="round"/></svg>
<svg class="i" style="left:993.4px;top:689px" width="9" height="14" viewBox="0 0 9 14"><ellipse cx="4.3" cy="3.9" rx="3.4" ry="3.9" fill="#e9e9e9"/><ellipse cx="4.7" cy="3.7" rx="1.0" ry="2.0" fill="#2b2b30"/><path d="M0.8 9 q3.6-2.6 7.4 0 v3.2 h-7.4z" fill="#7e7e7e"/><rect x="3.2" y="7.4" width="2.2" height="3.2" fill="#e6e6e6"/><rect x="2.2" y="11.2" width="4.6" height="1.3" fill="#d8d8d8"/><path d="M1.4 14 l1.8-1.5 h2.2 l1.8 1.5z" fill="#151515"/></svg>
<span class="ivar" style="left:604px;top:713px">Var</span>
<svg class="i" style="left:759px;top:713px" width="13" height="11" viewBox="0 0 13 11"><path d="M4.8 1 L8.8 3 L8.8 5.8 M4.8 1 L0.8 3 L0.8 7.6 L4.6 9.6 M0.9 3.1 L4.8 5 L8.7 3.1 M4.8 5 L4.8 8.6" fill="none" stroke="#56b6c2" stroke-width="1" stroke-linejoin="round" stroke-linecap="round"/><path d="M6.4 9.1 L7.9 7.4 L10.2 10.2 L12.2 8.2" fill="none" stroke="#56b6c2" stroke-width="1" stroke-linecap="round" stroke-linejoin="round"/></svg>
<svg class="i" style="left:1008.0px;top:712px" width="9" height="14" viewBox="0 0 9 14"><ellipse cx="4.3" cy="3.9" rx="3.4" ry="3.9" fill="#e9e9e9"/><ellipse cx="4.7" cy="3.7" rx="1.0" ry="2.0" fill="#2b2b30"/><path d="M0.8 9 q3.6-2.6 7.4 0 v3.2 h-7.4z" fill="#7e7e7e"/><rect x="3.2" y="7.4" width="2.2" height="3.2" fill="#e6e6e6"/><rect x="2.2" y="11.2" width="4.6" height="1.3" fill="#d8d8d8"/><path d="M1.4 14 l1.8-1.5 h2.2 l1.8 1.5z" fill="#151515"/></svg>
<span class="ivar" style="left:604px;top:756px">Var</span>
<svg class="i" style="left:759px;top:756px" width="13" height="11" viewBox="0 0 13 11"><path d="M4.8 1 L8.8 3 L8.8 5.8 M4.8 1 L0.8 3 L0.8 7.6 L4.6 9.6 M0.9 3.1 L4.8 5 L8.7 3.1 M4.8 5 L4.8 8.6" fill="none" stroke="#56b6c2" stroke-width="1" stroke-linejoin="round" stroke-linecap="round"/><path d="M6.4 9.1 L7.9 7.4 L10.2 10.2 L12.2 8.2" fill="none" stroke="#56b6c2" stroke-width="1" stroke-linecap="round" stroke-linejoin="round"/></svg>
<svg class="i" style="left:976.9px;top:755px" width="9" height="14" viewBox="0 0 9 14"><ellipse cx="4.3" cy="3.9" rx="3.4" ry="3.9" fill="#e9e9e9"/><ellipse cx="4.7" cy="3.7" rx="1.0" ry="2.0" fill="#2b2b30"/><path d="M0.8 9 q3.6-2.6 7.4 0 v3.2 h-7.4z" fill="#7e7e7e"/><rect x="3.2" y="7.4" width="2.2" height="3.2" fill="#e6e6e6"/><rect x="2.2" y="11.2" width="4.6" height="1.3" fill="#d8d8d8"/><path d="M1.4 14 l1.8-1.5 h2.2 l1.8 1.5z" fill="#151515"/></svg>
<span class="ivar" style="left:127px;top:802px">Var</span>
<svg class="i" style="left:229.8px;top:802px" width="13" height="11" viewBox="0 0 13 11"><path d="M4.8 1 L8.8 3 L8.8 5.8 M4.8 1 L0.8 3 L0.8 7.6 L4.6 9.6 M0.9 3.1 L4.8 5 L8.7 3.1 M4.8 5 L4.8 8.6" fill="none" stroke="#56b6c2" stroke-width="1" stroke-linejoin="round" stroke-linecap="round"/><path d="M6.4 9.1 L7.9 7.4 L10.2 10.2 L12.2 8.2" fill="none" stroke="#56b6c2" stroke-width="1" stroke-linecap="round" stroke-linejoin="round"/></svg>
<svg class="i" style="left:351.8px;top:800px" width="15" height="15" viewBox="0 0 15 15"><rect x="0.5" y="0.5" width="14" height="14" rx="1.5" fill="rgba(0,0,0,0.08)" stroke="rgba(86,182,194,0.42)" stroke-width="1"/><ellipse cx="7.5" cy="5.3" rx="0.85" ry="1.2" fill="#5ccbd4" opacity="0.92" transform="rotate(15 7.5 7.5)"/><ellipse cx="7.5" cy="5.3" rx="0.85" ry="1.2" fill="#5ccbd4" opacity="0.92" transform="rotate(75 7.5 7.5)"/><ellipse cx="7.5" cy="5.3" rx="0.85" ry="1.2" fill="#5ccbd4" opacity="0.92" transform="rotate(135 7.5 7.5)"/><ellipse cx="7.5" cy="5.3" rx="0.85" ry="1.2" fill="#5ccbd4" opacity="0.92" transform="rotate(195 7.5 7.5)"/><ellipse cx="7.5" cy="5.3" rx="0.85" ry="1.2" fill="#5ccbd4" opacity="0.92" transform="rotate(255 7.5 7.5)"/><ellipse cx="7.5" cy="5.3" rx="0.85" ry="1.2" fill="#5ccbd4" opacity="0.92" transform="rotate(315 7.5 7.5)"/><circle cx="7.5" cy="7.5" r="1.4" fill="#4fa3ad"/><circle cx="7.5" cy="7.5" r="0.8" fill="#3f5560"/></svg>
<span class="ivar" style="left:604px;top:801px">Var</span>
<svg class="i" style="left:759px;top:801px" width="13" height="11" viewBox="0 0 13 11"><path d="M4.8 1 L8.8 3 L8.8 5.8 M4.8 1 L0.8 3 L0.8 7.6 L4.6 9.6 M0.9 3.1 L4.8 5 L8.7 3.1 M4.8 5 L4.8 8.6" fill="none" stroke="#56b6c2" stroke-width="1" stroke-linejoin="round" stroke-linecap="round"/><path d="M6.4 9.1 L7.9 7.4 L10.2 10.2 L12.2 8.2" fill="none" stroke="#56b6c2" stroke-width="1" stroke-linecap="round" stroke-linejoin="round"/></svg>
<svg class="i" style="left:918.6px;top:800px" width="9" height="14" viewBox="0 0 9 14"><ellipse cx="4.3" cy="3.9" rx="3.4" ry="3.9" fill="#e9e9e9"/><ellipse cx="4.7" cy="3.7" rx="1.0" ry="2.0" fill="#2b2b30"/><path d="M0.8 9 q3.6-2.6 7.4 0 v3.2 h-7.4z" fill="#7e7e7e"/><rect x="3.2" y="7.4" width="2.2" height="3.2" fill="#e6e6e6"/><rect x="2.2" y="11.2" width="4.6" height="1.3" fill="#d8d8d8"/><path d="M1.4 14 l1.8-1.5 h2.2 l1.8 1.5z" fill="#151515"/></svg>
<span class="ivar" style="left:127px;top:849px">Var</span>
<svg class="i" style="left:229.8px;top:849px" width="13" height="11" viewBox="0 0 13 11"><path d="M4.8 1 L8.8 3 L8.8 5.8 M4.8 1 L0.8 3 L0.8 7.6 L4.6 9.6 M0.9 3.1 L4.8 5 L8.7 3.1 M4.8 5 L4.8 8.6" fill="none" stroke="#56b6c2" stroke-width="1" stroke-linejoin="round" stroke-linecap="round"/><path d="M6.4 9.1 L7.9 7.4 L10.2 10.2 L12.2 8.2" fill="none" stroke="#56b6c2" stroke-width="1" stroke-linecap="round" stroke-linejoin="round"/></svg>
<svg class="i" style="left:351.8px;top:847px" width="15" height="15" viewBox="0 0 15 15"><rect x="0.5" y="0.5" width="14" height="14" rx="1.5" fill="rgba(0,0,0,0.08)" stroke="rgba(86,182,194,0.42)" stroke-width="1"/><ellipse cx="7.5" cy="5.3" rx="0.85" ry="1.2" fill="#5ccbd4" opacity="0.92" transform="rotate(15 7.5 7.5)"/><ellipse cx="7.5" cy="5.3" rx="0.85" ry="1.2" fill="#5ccbd4" opacity="0.92" transform="rotate(75 7.5 7.5)"/><ellipse cx="7.5" cy="5.3" rx="0.85" ry="1.2" fill="#5ccbd4" opacity="0.92" transform="rotate(135 7.5 7.5)"/><ellipse cx="7.5" cy="5.3" rx="0.85" ry="1.2" fill="#5ccbd4" opacity="0.92" transform="rotate(195 7.5 7.5)"/><ellipse cx="7.5" cy="5.3" rx="0.85" ry="1.2" fill="#5ccbd4" opacity="0.92" transform="rotate(255 7.5 7.5)"/><ellipse cx="7.5" cy="5.3" rx="0.85" ry="1.2" fill="#5ccbd4" opacity="0.92" transform="rotate(315 7.5 7.5)"/><circle cx="7.5" cy="7.5" r="1.4" fill="#4fa3ad"/><circle cx="7.5" cy="7.5" r="0.8" fill="#3f5560"/></svg>
<span class="ivar" style="left:604px;top:848px">Var</span>
<svg class="i" style="left:759px;top:848px" width="13" height="11" viewBox="0 0 13 11"><path d="M4.8 1 L8.8 3 L8.8 5.8 M4.8 1 L0.8 3 L0.8 7.6 L4.6 9.6 M0.9 3.1 L4.8 5 L8.7 3.1 M4.8 5 L4.8 8.6" fill="none" stroke="#56b6c2" stroke-width="1" stroke-linejoin="round" stroke-linecap="round"/><path d="M6.4 9.1 L7.9 7.4 L10.2 10.2 L12.2 8.2" fill="none" stroke="#56b6c2" stroke-width="1" stroke-linecap="round" stroke-linejoin="round"/></svg>
<svg class="i" style="left:918.6px;top:847px" width="9" height="14" viewBox="0 0 9 14"><ellipse cx="4.3" cy="3.9" rx="3.4" ry="3.9" fill="#e9e9e9"/><ellipse cx="4.7" cy="3.7" rx="1.0" ry="2.0" fill="#2b2b30"/><path d="M0.8 9 q3.6-2.6 7.4 0 v3.2 h-7.4z" fill="#7e7e7e"/><rect x="3.2" y="7.4" width="2.2" height="3.2" fill="#e6e6e6"/><rect x="2.2" y="11.2" width="4.6" height="1.3" fill="#d8d8d8"/><path d="M1.4 14 l1.8-1.5 h2.2 l1.8 1.5z" fill="#151515"/></svg>
<span class="ivar" style="left:127px;top:896px">Var</span>
<svg class="i" style="left:229.8px;top:896px" width="13" height="11" viewBox="0 0 13 11"><path d="M4.8 1 L8.8 3 L8.8 5.8 M4.8 1 L0.8 3 L0.8 7.6 L4.6 9.6 M0.9 3.1 L4.8 5 L8.7 3.1 M4.8 5 L4.8 8.6" fill="none" stroke="#56b6c2" stroke-width="1" stroke-linejoin="round" stroke-linecap="round"/><path d="M6.4 9.1 L7.9 7.4 L10.2 10.2 L12.2 8.2" fill="none" stroke="#56b6c2" stroke-width="1" stroke-linecap="round" stroke-linejoin="round"/></svg>
<svg class="i" style="left:351.8px;top:894px" width="15" height="15" viewBox="0 0 15 15"><rect x="0.5" y="0.5" width="14" height="14" rx="1.5" fill="rgba(0,0,0,0.08)" stroke="rgba(86,182,194,0.42)" stroke-width="1"/><ellipse cx="7.5" cy="5.3" rx="0.85" ry="1.2" fill="#5ccbd4" opacity="0.92" transform="rotate(15 7.5 7.5)"/><ellipse cx="7.5" cy="5.3" rx="0.85" ry="1.2" fill="#5ccbd4" opacity="0.92" transform="rotate(75 7.5 7.5)"/><ellipse cx="7.5" cy="5.3" rx="0.85" ry="1.2" fill="#5ccbd4" opacity="0.92" transform="rotate(135 7.5 7.5)"/><ellipse cx="7.5" cy="5.3" rx="0.85" ry="1.2" fill="#5ccbd4" opacity="0.92" transform="rotate(195 7.5 7.5)"/><ellipse cx="7.5" cy="5.3" rx="0.85" ry="1.2" fill="#5ccbd4" opacity="0.92" transform="rotate(255 7.5 7.5)"/><ellipse cx="7.5" cy="5.3" rx="0.85" ry="1.2" fill="#5ccbd4" opacity="0.92" transform="rotate(315 7.5 7.5)"/><circle cx="7.5" cy="7.5" r="1.4" fill="#4fa3ad"/><circle cx="7.5" cy="7.5" r="0.8" fill="#3f5560"/></svg>
<span class="ivar" style="left:604px;top:895px">Var</span>
<svg class="i" style="left:759px;top:895px" width="13" height="11" viewBox="0 0 13 11"><path d="M4.8 1 L8.8 3 L8.8 5.8 M4.8 1 L0.8 3 L0.8 7.6 L4.6 9.6 M0.9 3.1 L4.8 5 L8.7 3.1 M4.8 5 L4.8 8.6" fill="none" stroke="#56b6c2" stroke-width="1" stroke-linejoin="round" stroke-linecap="round"/><path d="M6.4 9.1 L7.9 7.4 L10.2 10.2 L12.2 8.2" fill="none" stroke="#56b6c2" stroke-width="1" stroke-linecap="round" stroke-linejoin="round"/></svg>
<svg class="i" style="left:886.8px;top:894px" width="9" height="14" viewBox="0 0 9 14"><ellipse cx="4.3" cy="3.9" rx="3.4" ry="3.9" fill="#e9e9e9"/><ellipse cx="4.7" cy="3.7" rx="1.0" ry="2.0" fill="#2b2b30"/><path d="M0.8 9 q3.6-2.6 7.4 0 v3.2 h-7.4z" fill="#7e7e7e"/><rect x="3.2" y="7.4" width="2.2" height="3.2" fill="#e6e6e6"/><rect x="2.2" y="11.2" width="4.6" height="1.3" fill="#d8d8d8"/><path d="M1.4 14 l1.8-1.5 h2.2 l1.8 1.5z" fill="#151515"/></svg>
<span class="ivar" style="left:127px;top:943px">Var</span>
<svg class="i" style="left:229.8px;top:943px" width="13" height="11" viewBox="0 0 13 11"><path d="M4.8 1 L8.8 3 L8.8 5.8 M4.8 1 L0.8 3 L0.8 7.6 L4.6 9.6 M0.9 3.1 L4.8 5 L8.7 3.1 M4.8 5 L4.8 8.6" fill="none" stroke="#56b6c2" stroke-width="1" stroke-linejoin="round" stroke-linecap="round"/><path d="M6.4 9.1 L7.9 7.4 L10.2 10.2 L12.2 8.2" fill="none" stroke="#56b6c2" stroke-width="1" stroke-linecap="round" stroke-linejoin="round"/></svg>
<svg class="i" style="left:351.8px;top:941px" width="15" height="15" viewBox="0 0 15 15"><rect x="0.5" y="0.5" width="14" height="14" rx="1.5" fill="rgba(0,0,0,0.08)" stroke="rgba(86,182,194,0.42)" stroke-width="1"/><ellipse cx="7.5" cy="5.3" rx="0.85" ry="1.2" fill="#5ccbd4" opacity="0.92" transform="rotate(15 7.5 7.5)"/><ellipse cx="7.5" cy="5.3" rx="0.85" ry="1.2" fill="#5ccbd4" opacity="0.92" transform="rotate(75 7.5 7.5)"/><ellipse cx="7.5" cy="5.3" rx="0.85" ry="1.2" fill="#5ccbd4" opacity="0.92" transform="rotate(135 7.5 7.5)"/><ellipse cx="7.5" cy="5.3" rx="0.85" ry="1.2" fill="#5ccbd4" opacity="0.92" transform="rotate(195 7.5 7.5)"/><ellipse cx="7.5" cy="5.3" rx="0.85" ry="1.2" fill="#5ccbd4" opacity="0.92" transform="rotate(255 7.5 7.5)"/><ellipse cx="7.5" cy="5.3" rx="0.85" ry="1.2" fill="#5ccbd4" opacity="0.92" transform="rotate(315 7.5 7.5)"/><circle cx="7.5" cy="7.5" r="1.4" fill="#4fa3ad"/><circle cx="7.5" cy="7.5" r="0.8" fill="#3f5560"/></svg>
<span class="ivar" style="left:604px;top:942px">Var</span>
<svg class="i" style="left:759px;top:942px" width="13" height="11" viewBox="0 0 13 11"><path d="M4.8 1 L8.8 3 L8.8 5.8 M4.8 1 L0.8 3 L0.8 7.6 L4.6 9.6 M0.9 3.1 L4.8 5 L8.7 3.1 M4.8 5 L4.8 8.6" fill="none" stroke="#56b6c2" stroke-width="1" stroke-linejoin="round" stroke-linecap="round"/><path d="M6.4 9.1 L7.9 7.4 L10.2 10.2 L12.2 8.2" fill="none" stroke="#56b6c2" stroke-width="1" stroke-linecap="round" stroke-linejoin="round"/></svg>
<svg class="i" style="left:886.8px;top:941px" width="9" height="14" viewBox="0 0 9 14"><ellipse cx="4.3" cy="3.9" rx="3.4" ry="3.9" fill="#e9e9e9"/><ellipse cx="4.7" cy="3.7" rx="1.0" ry="2.0" fill="#2b2b30"/><path d="M0.8 9 q3.6-2.6 7.4 0 v3.2 h-7.4z" fill="#7e7e7e"/><rect x="3.2" y="7.4" width="2.2" height="3.2" fill="#e6e6e6"/><rect x="2.2" y="11.2" width="4.6" height="1.3" fill="#d8d8d8"/><path d="M1.4 14 l1.8-1.5 h2.2 l1.8 1.5z" fill="#151515"/></svg>
<svg class="i" style="left:24.6px;top:996.1px" width="11" height="8" viewBox="0 0 11 8"><path d="M2.4 2.7 L5.5 5.2 L8.6 2.7" fill="none" stroke="#fff" stroke-width="1.3" stroke-linecap="round" stroke-linejoin="round"/></svg>
<span class="ivar" style="left:83px;top:1028px">Var</span>
<svg class="i" style="left:185.8px;top:1027.5px" width="12" height="11" viewBox="0 0 12 11"><path d="M1.2 0.4h6.8a2.2 2.2 0 0 1 2.2 2.2v3.6h-7.2v3.9h-1.8a1.2 1.2 0 0 1-1.2-1.2v-7.3a1.2 1.2 0 0 1 1.2-1.2z" fill="#56b6c2" opacity="0.82"/><rect x="3.4" y="2.1" width="3.6" height="2.3" fill="#3a4150"/><rect x="0.9" y="1.5" width="1" height="1" fill="#353b49"/><rect x="0.9" y="3.5" width="1" height="1" fill="#353b49"/><rect x="0.9" y="5.5" width="1" height="1" fill="#353b49"/><rect x="0.9" y="7.5" width="1" height="1" fill="#353b49"/><rect x="8.3" y="1.6" width="0.9" height="0.8" fill="#3a4150"/><rect x="8.3" y="3.2" width="0.9" height="0.8" fill="#3a4150"/><rect x="8.3" y="4.6" width="0.9" height="0.8" fill="#3a4150"/><path d="M5.4 9.2 q1.3-2.4 2.7-0.7 t2.8-1.0" fill="none" stroke="#56b6c2" stroke-width="1.2" stroke-linecap="round"/></svg>
<svg class="i" style="left:604px;top:1026px" width="14" height="14" viewBox="0 0 14 14"><path d="M5 0.5v2.2h3.2V0.5 M0.8 3v2.5h2.6 M12.6 3v2.5h-2.6 M0.5 7.6h3 M12.9 7.6h-3 M0.8 13v-2.8h2.6 M12.6 13v-2.8h-2.6" fill="none" stroke="#3144ae" stroke-width="0.95" opacity="0.85"/><rect x="3" y="3.6" width="7.4" height="8.2" rx="0.8" fill="#2a3fae"/><rect x="3.7" y="4.5" width="6" height="6.6" fill="#2fa9e2"/><path d="M6.2 4.5h3.5v4z" fill="#58bff0"/></svg>
<svg class="i" style="left:46.6px;top:1038.1px" width="11" height="8" viewBox="0 0 11 8"><path d="M2.4 2.7 L5.5 5.2 L8.6 2.7" fill="none" stroke="#fff" stroke-width="1.3" stroke-linecap="round" stroke-linejoin="round"/></svg>
<svg class="i" style="left:281px;top:1071px" width="15" height="15" viewBox="0 0 15 15"><rect x="0.5" y="0.5" width="14" height="14" rx="1.5" fill="rgba(0,0,0,0.08)" stroke="rgba(86,182,194,0.42)" stroke-width="1"/><ellipse cx="7.5" cy="5.3" rx="0.85" ry="1.2" fill="#5ccbd4" opacity="0.92" transform="rotate(15 7.5 7.5)"/><ellipse cx="7.5" cy="5.3" rx="0.85" ry="1.2" fill="#5ccbd4" opacity="0.92" transform="rotate(75 7.5 7.5)"/><ellipse cx="7.5" cy="5.3" rx="0.85" ry="1.2" fill="#5ccbd4" opacity="0.92" transform="rotate(135 7.5 7.5)"/><ellipse cx="7.5" cy="5.3" rx="0.85" ry="1.2" fill="#5ccbd4" opacity="0.92" transform="rotate(195 7.5 7.5)"/><ellipse cx="7.5" cy="5.3" rx="0.85" ry="1.2" fill="#5ccbd4" opacity="0.92" transform="rotate(255 7.5 7.5)"/><ellipse cx="7.5" cy="5.3" rx="0.85" ry="1.2" fill="#5ccbd4" opacity="0.92" transform="rotate(315 7.5 7.5)"/><circle cx="7.5" cy="7.5" r="1.4" fill="#4fa3ad"/><circle cx="7.5" cy="7.5" r="0.8" fill="#3f5560"/></svg>
<span class="ivar" style="left:105px;top:1095px">Var</span>
<svg class="i" style="left:207.8px;top:1095px" width="13" height="11" viewBox="0 0 13 11"><path d="M4.8 1 L8.8 3 L8.8 5.8 M4.8 1 L0.8 3 L0.8 7.6 L4.6 9.6 M0.9 3.1 L4.8 5 L8.7 3.1 M4.8 5 L4.8 8.6" fill="none" stroke="#56b6c2" stroke-width="1" stroke-linejoin="round" stroke-linecap="round"/><path d="M6.4 9.1 L7.9 7.4 L10.2 10.2 L12.2 8.2" fill="none" stroke="#56b6c2" stroke-width="1" stroke-linecap="round" stroke-linejoin="round"/></svg>
<svg class="i" style="left:277.3px;top:1093px" width="15" height="15" viewBox="0 0 15 15"><rect x="0.5" y="0.5" width="14" height="14" rx="1.5" fill="rgba(0,0,0,0.08)" stroke="rgba(86,182,194,0.42)" stroke-width="1"/><ellipse cx="7.5" cy="5.3" rx="0.85" ry="1.2" fill="#5ccbd4" opacity="0.92" transform="rotate(15 7.5 7.5)"/><ellipse cx="7.5" cy="5.3" rx="0.85" ry="1.2" fill="#5ccbd4" opacity="0.92" transform="rotate(75 7.5 7.5)"/><ellipse cx="7.5" cy="5.3" rx="0.85" ry="1.2" fill="#5ccbd4" opacity="0.92" transform="rotate(135 7.5 7.5)"/><ellipse cx="7.5" cy="5.3" rx="0.85" ry="1.2" fill="#5ccbd4" opacity="0.92" transform="rotate(195 7.5 7.5)"/><ellipse cx="7.5" cy="5.3" rx="0.85" ry="1.2" fill="#5ccbd4" opacity="0.92" transform="rotate(255 7.5 7.5)"/><ellipse cx="7.5" cy="5.3" rx="0.85" ry="1.2" fill="#5ccbd4" opacity="0.92" transform="rotate(315 7.5 7.5)"/><circle cx="7.5" cy="7.5" r="1.4" fill="#4fa3ad"/><circle cx="7.5" cy="7.5" r="0.8" fill="#3f5560"/></svg>
<svg class="i" style="left:68.6px;top:1095.1px" width="11" height="8" viewBox="0 0 11 8"><path d="M2.4 2.7 L5.5 5.2 L8.6 2.7" fill="none" stroke="#fff" stroke-width="1.3" stroke-linecap="round" stroke-linejoin="round"/></svg>
<span class="ivar" style="left:127px;top:1142px">Var</span>
<svg class="i" style="left:229.8px;top:1142px" width="13" height="11" viewBox="0 0 13 11"><path d="M4.8 1 L8.8 3 L8.8 5.8 M4.8 1 L0.8 3 L0.8 7.6 L4.6 9.6 M0.9 3.1 L4.8 5 L8.7 3.1 M4.8 5 L4.8 8.6" fill="none" stroke="#56b6c2" stroke-width="1" stroke-linejoin="round" stroke-linecap="round"/><path d="M6.4 9.1 L7.9 7.4 L10.2 10.2 L12.2 8.2" fill="none" stroke="#56b6c2" stroke-width="1" stroke-linecap="round" stroke-linejoin="round"/></svg>
<svg class="i" style="left:351.8px;top:1140px" width="15" height="15" viewBox="0 0 15 15"><rect x="0.5" y="0.5" width="14" height="14" rx="1.5" fill="rgba(0,0,0,0.08)" stroke="rgba(86,182,194,0.42)" stroke-width="1"/><ellipse cx="7.5" cy="5.3" rx="0.85" ry="1.2" fill="#5ccbd4" opacity="0.92" transform="rotate(15 7.5 7.5)"/><ellipse cx="7.5" cy="5.3" rx="0.85" ry="1.2" fill="#5ccbd4" opacity="0.92" transform="rotate(75 7.5 7.5)"/><ellipse cx="7.5" cy="5.3" rx="0.85" ry="1.2" fill="#5ccbd4" opacity="0.92" transform="rotate(135 7.5 7.5)"/><ellipse cx="7.5" cy="5.3" rx="0.85" ry="1.2" fill="#5ccbd4" opacity="0.92" transform="rotate(195 7.5 7.5)"/><ellipse cx="7.5" cy="5.3" rx="0.85" ry="1.2" fill="#5ccbd4" opacity="0.92" transform="rotate(255 7.5 7.5)"/><ellipse cx="7.5" cy="5.3" rx="0.85" ry="1.2" fill="#5ccbd4" opacity="0.92" transform="rotate(315 7.5 7.5)"/><circle cx="7.5" cy="7.5" r="1.4" fill="#4fa3ad"/><circle cx="7.5" cy="7.5" r="0.8" fill="#3f5560"/></svg>
<span class="ivar" style="left:604px;top:1141px">Var</span>
<svg class="i" style="left:759px;top:1141px" width="13" height="11" viewBox="0 0 13 11"><path d="M4.8 1 L8.8 3 L8.8 5.8 M4.8 1 L0.8 3 L0.8 7.6 L4.6 9.6 M0.9 3.1 L4.8 5 L8.7 3.1 M4.8 5 L4.8 8.6" fill="none" stroke="#56b6c2" stroke-width="1" stroke-linejoin="round" stroke-linecap="round"/><path d="M6.4 9.1 L7.9 7.4 L10.2 10.2 L12.2 8.2" fill="none" stroke="#56b6c2" stroke-width="1" stroke-linecap="round" stroke-linejoin="round"/></svg>
<svg class="i" style="left:1004.0px;top:1139px" width="15" height="15" viewBox="0 0 15 15"><rect x="0.5" y="0.5" width="14" height="14" rx="1.5" fill="rgba(0,0,0,0.08)" stroke="rgba(86,182,194,0.42)" stroke-width="1"/><ellipse cx="7.5" cy="5.3" rx="0.85" ry="1.2" fill="#5ccbd4" opacity="0.92" transform="rotate(15 7.5 7.5)"/><ellipse cx="7.5" cy="5.3" rx="0.85" ry="1.2" fill="#5ccbd4" opacity="0.92" transform="rotate(75 7.5 7.5)"/><ellipse cx="7.5" cy="5.3" rx="0.85" ry="1.2" fill="#5ccbd4" opacity="0.92" transform="rotate(135 7.5 7.5)"/><ellipse cx="7.5" cy="5.3" rx="0.85" ry="1.2" fill="#5ccbd4" opacity="0.92" transform="rotate(195 7.5 7.5)"/><ellipse cx="7.5" cy="5.3" rx="0.85" ry="1.2" fill="#5ccbd4" opacity="0.92" transform="rotate(255 7.5 7.5)"/><ellipse cx="7.5" cy="5.3" rx="0.85" ry="1.2" fill="#5ccbd4" opacity="0.92" transform="rotate(315 7.5 7.5)"/><circle cx="7.5" cy="7.5" r="1.4" fill="#4fa3ad"/><circle cx="7.5" cy="7.5" r="0.8" fill="#3f5560"/></svg>
<span class="x hd" style="left:31.2px;top:0.5px;letter-spacing:0.233px">While these conditions are true:</span>
<span class="x t" style="left:55.4px;top:23.0px;letter-spacing:0.183px">The number of children in the array variable</span>
<span class="x v" style="left:366.5px;top:23.0px;letter-spacing:0.146px">eventq</span>
<span class="x o" style="left:418.8px;top:23.0px;letter-spacing:0.000px">&gt;</span>
<span class="x n" style="left:434.4px;top:23.0px;letter-spacing:0.000px">0</span>
<span class="x add" style="left:37.0px;top:45.0px;letter-spacing:0.516px">Add condition</span>
<span class="x hd" style="left:30.5px;top:66.0px;letter-spacing:0.004px">Repeat these:</span>
<span class="x add" style="left:37.0px;top:87.0px;letter-spacing:0.516px">Add condition</span>
<span class="x add" style="left:602.6px;top:86.0px;letter-spacing:0.360px">Add action</span>
<span class="x grp" style="left:58.7px;top:115.0px;letter-spacing:0.022px">Workshop Setup</span>
<span class="x t" style="left:98.7px;top:150.0px;letter-spacing:0.061px">The variable</span>
<span class="x v" style="left:201.0px;top:150.0px;letter-spacing:0.309px">eventq[0]</span>
<span class="x o" style="left:270.4px;top:150.0px;letter-spacing:0.000px">=</span>
<span class="x s" style="left:286.3px;top:150.0px;letter-spacing:0.164px">&quot;workshop_setup&quot;</span>
<span class="x add" style="left:81.0px;top:172.0px;letter-spacing:0.516px">Add condition</span>
<span class="x t" style="left:619.9px;top:149.0px;letter-spacing:-0.009px">Log message</span>
<span class="x s" style="left:712.5px;top:149.0px;letter-spacing:0.181px">&quot;Event trigger: &quot;</span>
<span class="x s" style="left:822.0px;top:149.0px;letter-spacing:0.000px">+</span>
<span class="x s" style="left:834.8px;top:149.0px;letter-spacing:0.421px">eventq[0]</span>
<span class="x t" style="left:902.0px;top:149.0px;letter-spacing:0.423px">of type</span>
<span class="x t" style="left:955.0px;top:149.0px;letter-spacing:0.361px">to the console in group</span>
<span class="x add" style="left:602.6px;top:171.0px;letter-spacing:0.360px">Add action</span>
<span class="x hd" style="left:96.8px;top:195.0px;letter-spacing:0.069px">Repeat for each instance of</span>
<span class="x obj" style="left:297.9px;top:195.0px;letter-spacing:-0.293px">Card</span>
<span class="x hd" style="left:333.4px;top:195.0px;letter-spacing:0.000px">:</span>
<span class="x t" style="left:120.7px;top:217.0px;letter-spacing:0.061px">The variable</span>
<span class="x v" style="left:223.0px;top:217.0px;letter-spacing:-0.521px">Area</span>
<span class="x t" style="left:258.8px;top:217.0px;letter-spacing:0.836px">of</span>
<span class="x obj" style="left:294.6px;top:217.0px;letter-spacing:-0.326px">Card</span>
<span class="x o" style="left:333.9px;top:217.0px;letter-spacing:0.000px">=</span>
<span class="x s" style="left:349.2px;top:217.0px;letter-spacing:-0.237px">&quot;Rack&quot;</span>
<span class="x add" style="left:103.0px;top:239.0px;letter-spacing:0.516px">Add condition</span>
<span class="x add" style="left:602.6px;top:215.0px;letter-spacing:0.360px">Add action</span>
<span class="x t" style="left:142.7px;top:264.0px;letter-spacing:0.061px">The variable</span>
<span class="x v" style="left:244.8px;top:264.0px;letter-spacing:0.106px">DBLookupID</span>
<span class="x t" style="left:333.3px;top:264.0px;letter-spacing:0.836px">of</span>
<span class="x obj" style="left:369.1px;top:264.0px;letter-spacing:-0.326px">Card</span>
<span class="x o" style="left:408.4px;top:264.0px;letter-spacing:0.000px">=</span>
<span class="x s" style="left:424.8px;top:264.0px;letter-spacing:0.119px">&quot;hacker&quot;</span>
<span class="x add" style="left:125.0px;top:286.0px;letter-spacing:0.516px">Add condition</span>
<span class="x t" style="left:620.8px;top:263.0px;letter-spacing:0.082px">Change the variable</span>
<span class="x v" style="left:775.5px;top:263.0px;letter-spacing:0.042px">workshop.reroll_cost.now</span>
<span class="x t" style="left:941.6px;top:263.0px;letter-spacing:0.000px">:</span>
<span class="x op" style="left:951.2px;top:263.0px;letter-spacing:0.036px">add</span>
<span class="x n" style="left:982.3px;top:263.0px;letter-spacing:0.024px">Card.equipment_db.effect_curr_value</span>
<span class="x add" style="left:602.6px;top:285.0px;letter-spacing:0.360px">Add action</span>
<span class="x grp" style="left:59.2px;top:314.0px;letter-spacing:-0.226px">Player Creation</span>
<span class="x t" style="left:98.7px;top:349.0px;letter-spacing:0.061px">The variable</span>
<span class="x v" style="left:201.0px;top:349.0px;letter-spacing:0.309px">eventq[0]</span>
<span class="x o" style="left:270.4px;top:349.0px;letter-spacing:0.000px">=</span>
<span class="x s" style="left:286.3px;top:349.0px;letter-spacing:0.138px">&quot;player_creation&quot;</span>
<span class="x add" style="left:81.0px;top:371.0px;letter-spacing:0.516px">Add condition</span>
<span class="x t" style="left:619.9px;top:348.0px;letter-spacing:-0.009px">Log message</span>
<span class="x s" style="left:712.5px;top:348.0px;letter-spacing:0.181px">&quot;Event trigger: &quot;</span>
<span class="x s" style="left:822.0px;top:348.0px;letter-spacing:0.000px">+</span>
<span class="x s" style="left:834.8px;top:348.0px;letter-spacing:0.421px">eventq[0]</span>
<span class="x t" style="left:902.0px;top:348.0px;letter-spacing:0.423px">of type</span>
<span class="x t" style="left:955.0px;top:348.0px;letter-spacing:0.361px">to the console in group</span>
<span class="x add" style="left:602.6px;top:370.0px;letter-spacing:0.360px">Add action</span>
<span class="x hd" style="left:96.8px;top:394.0px;letter-spacing:0.069px">Repeat for each instance of</span>
<span class="x obj" style="left:297.9px;top:394.0px;letter-spacing:-0.293px">Card</span>
<span class="x hd" style="left:333.4px;top:394.0px;letter-spacing:0.000px">:</span>
<span class="x t" style="left:120.7px;top:416.0px;letter-spacing:0.061px">The variable</span>
<span class="x v" style="left:223.0px;top:416.0px;letter-spacing:-0.521px">Area</span>
<span class="x t" style="left:258.8px;top:416.0px;letter-spacing:0.836px">of</span>
<span class="x obj" style="left:294.6px;top:416.0px;letter-spacing:-0.326px">Card</span>
<span class="x o" style="left:333.9px;top:416.0px;letter-spacing:0.000px">=</span>
<span class="x s" style="left:349.2px;top:416.0px;letter-spacing:-0.237px">&quot;Rack&quot;</span>
<span class="x add" style="left:103.0px;top:438.0px;letter-spacing:0.516px">Add condition</span>
<span class="x add" style="left:602.6px;top:414.0px;letter-spacing:0.360px">Add action</span>
<span class="x t" style="left:142.7px;top:463.0px;letter-spacing:0.061px">The variable</span>
<span class="x v" style="left:244.8px;top:463.0px;letter-spacing:0.106px">DBLookupID</span>
<span class="x t" style="left:333.3px;top:463.0px;letter-spacing:0.836px">of</span>
<span class="x obj" style="left:369.1px;top:463.0px;letter-spacing:-0.326px">Card</span>
<span class="x o" style="left:408.4px;top:463.0px;letter-spacing:0.000px">=</span>
<span class="x s" style="left:424.8px;top:463.0px;letter-spacing:0.198px">&quot;vampire&quot;</span>
<span class="x add" style="left:125.0px;top:485.0px;letter-spacing:0.516px">Add condition</span>
<span class="x t" style="left:620.8px;top:462.0px;letter-spacing:0.082px">Change the variable</span>
<span class="x v" style="left:773.7px;top:462.0px;letter-spacing:-0.213px">Fuel.FuelRechargeRate.Ledge</span>
<span class="x t" style="left:971.7px;top:462.0px;letter-spacing:0.636px">of</span>
<span class="x obj" style="left:1007.9px;top:462.0px;letter-spacing:-0.379px">Player</span>
<span class="x tb" style="left:1051.1px;top:462.0px;letter-spacing:0.000px">:</span>
<span class="x op" style="left:1061.0px;top:462.0px;letter-spacing:0.036px">add</span>
<span class="x n" style="left:1092.4px;top:462.0px;letter-spacing:0.023px">run.fuel.fuel_recharge_rate.ledge * Card.equipment_db.effect_curr_value</span>
<span class="x t" style="left:619.9px;top:485.0px;letter-spacing:-0.009px">Log message</span>
<span class="x s" style="left:713.0px;top:485.0px;letter-spacing:0.311px">&quot;Modifier: &quot;</span>
<span class="x s" style="left:793.3px;top:485.0px;letter-spacing:0.000px">+</span>
<span class="x s" style="left:805.9px;top:485.0px;letter-spacing:0.018px">Card.equipment_db.effect_curr_value</span>
<span class="x t" style="left:1054.6px;top:485.0px;letter-spacing:0.389px">of type</span>
<span class="x s" style="left:1106.6px;top:485.0px;letter-spacing:0.655px">&quot;info&quot;</span>
<span class="x t" style="left:1148.7px;top:485.0px;letter-spacing:0.334px">to the console in group</span>
<span class="x s" style="left:1309.0px;top:485.0px;letter-spacing:0.087px">&quot;Events/&quot;</span>
<span class="x s" style="left:1374.1px;top:485.0px;letter-spacing:0.000px">+</span>
<span class="x s" style="left:1387.5px;top:485.0px;letter-spacing:0.384px">eventq[0]</span>
<span class="x t" style="left:619.9px;top:508.0px;letter-spacing:-0.009px">Log message</span>
<span class="x s" style="left:712.2px;top:508.0px;letter-spacing:-0.071px">Card.DBLookupID</span>
<span class="x s" style="left:834.5px;top:508.0px;letter-spacing:0.000px">+</span>
<span class="x s" style="left:848.6px;top:508.0px;letter-spacing:-0.119px">&quot; set Fuel.FuelRechargeRate.Ledge to &quot;</span>
<span class="x s" style="left:1106.9px;top:508.0px;letter-spacing:0.000px">+</span>
<span class="x s" style="left:1119.9px;top:508.0px;letter-spacing:-0.208px">Player.Fuel.FuelRechargeRate.Ledge</span>
<span class="x s" style="left:1361.0px;top:508.0px;letter-spacing:0.000px">+</span>
<span class="x s" style="left:1374.9px;top:508.0px;letter-spacing:0.188px">&quot; as part of &quot;</span>
<span class="x s" style="left:1462.0px;top:508.0px;letter-spacing:0.000px">+</span>
<span class="x s" style="left:1475.0px;top:508.0px;letter-spacing:0.359px">eventq[0]</span>
<span class="x t" style="left:1542.8px;top:508.0px;letter-spacing:0.456px">of type</span>
<span class="x s" style="left:604.5px;top:528.0px;letter-spacing:0.715px">&quot;info&quot;</span>
<span class="x t" style="left:646.9px;top:528.0px;letter-spacing:0.348px">to the console in group</span>
<span class="x s" style="left:808.3px;top:528.0px;letter-spacing:0.099px">&quot;Events/&quot;</span>
<span class="x s" style="left:872.8px;top:528.0px;letter-spacing:0.000px">+</span>
<span class="x s" style="left:886.0px;top:528.0px;letter-spacing:0.384px">eventq[0]</span>
<span class="x add" style="left:602.6px;top:550.0px;letter-spacing:0.360px">Add action</span>
<span class="x t" style="left:142.7px;top:574.0px;letter-spacing:0.061px">The variable</span>
<span class="x v" style="left:244.8px;top:574.0px;letter-spacing:0.106px">DBLookupID</span>
<span class="x t" style="left:333.3px;top:574.0px;letter-spacing:0.836px">of</span>
<span class="x obj" style="left:369.1px;top:574.0px;letter-spacing:-0.326px">Card</span>
<span class="x o" style="left:408.4px;top:574.0px;letter-spacing:0.000px">=</span>
<span class="x s" style="left:424.8px;top:574.0px;letter-spacing:0.349px">&quot;werewolf&quot;</span>
<span class="x add" style="left:125.0px;top:596.0px;letter-spacing:0.516px">Add condition</span>
<span class="x t" style="left:620.8px;top:573.0px;letter-spacing:0.082px">Change the variable</span>
<span class="x v" style="left:773.7px;top:573.0px;letter-spacing:-0.165px">Fuel.FuelRechargeRate.Running</span>
<span class="x t" style="left:986.3px;top:573.0px;letter-spacing:0.636px">of</span>
<span class="x obj" style="left:1022.5px;top:573.0px;letter-spacing:-0.379px">Player</span>
<span class="x tb" style="left:1065.7px;top:573.0px;letter-spacing:0.000px">:</span>
<span class="x op" style="left:1075.6px;top:573.0px;letter-spacing:0.036px">add</span>
<span class="x n" style="left:1107.0px;top:573.0px;letter-spacing:0.074px">run.fuel.fuel_recharge_rate.running *</span>
<span class="x n" style="left:603.9px;top:593.0px;letter-spacing:0.006px">Card.equipment_db.effect_curr_value</span>
<span class="x add" style="left:602.6px;top:615.0px;letter-spacing:0.360px">Add action</span>
<span class="x t" style="left:142.7px;top:639.0px;letter-spacing:0.061px">The variable</span>
<span class="x v" style="left:244.8px;top:639.0px;letter-spacing:0.106px">DBLookupID</span>
<span class="x t" style="left:333.3px;top:639.0px;letter-spacing:0.836px">of</span>
<span class="x obj" style="left:369.1px;top:639.0px;letter-spacing:-0.326px">Card</span>
<span class="x o" style="left:408.4px;top:639.0px;letter-spacing:0.000px">=</span>
<span class="x s" style="left:424.8px;top:639.0px;letter-spacing:0.373px">&quot;zombie&quot;</span>
<span class="x add" style="left:125.0px;top:661.0px;letter-spacing:0.516px">Add condition</span>
<span class="x t" style="left:620.8px;top:638.0px;letter-spacing:0.082px">Change the variable</span>
<span class="x v" style="left:773.7px;top:638.0px;letter-spacing:-0.203px">Fuel.FuelRechargeRate.Idle</span>
<span class="x t" style="left:955.2px;top:638.0px;letter-spacing:0.636px">of</span>
<span class="x obj" style="left:991.4px;top:638.0px;letter-spacing:-0.379px">Player</span>
<span class="x tb" style="left:1034.6px;top:638.0px;letter-spacing:0.000px">:</span>
<span class="x op" style="left:1044.5px;top:638.0px;letter-spacing:0.036px">add</span>
<span class="x n" style="left:1075.9px;top:638.0px;letter-spacing:0.032px">run.fuel.fuel_recharge_rate.idle * Card.equipment_db.effect_curr_value</span>
<span class="x add" style="left:602.6px;top:660.0px;letter-spacing:0.360px">Add action</span>
<span class="x t" style="left:142.7px;top:686.0px;letter-spacing:0.061px">The variable</span>
<span class="x v" style="left:244.8px;top:686.0px;letter-spacing:0.106px">DBLookupID</span>
<span class="x t" style="left:333.3px;top:686.0px;letter-spacing:0.836px">of</span>
<span class="x obj" style="left:369.1px;top:686.0px;letter-spacing:-0.326px">Card</span>
<span class="x o" style="left:408.4px;top:686.0px;letter-spacing:0.000px">=</span>
<span class="x s" style="left:424.8px;top:686.0px;letter-spacing:0.182px">&quot;frankenstein&quot;</span>
<span class="x add" style="left:125.0px;top:708.0px;letter-spacing:0.516px">Add condition</span>
<span class="x t" style="left:620.8px;top:685.0px;letter-spacing:0.082px">Change the variable</span>
<span class="x v" style="left:773.7px;top:685.0px;letter-spacing:-0.213px">Fuel.FuelRechargeRate.Ledge</span>
<span class="x t" style="left:971.7px;top:685.0px;letter-spacing:0.636px">of</span>
<span class="x obj" style="left:1007.9px;top:685.0px;letter-spacing:-0.379px">Player</span>
<span class="x tb" style="left:1051.1px;top:685.0px;letter-spacing:0.000px">:</span>
<span class="x op" style="left:1061.0px;top:685.0px;letter-spacing:0.036px">add</span>
<span class="x n" style="left:1092.4px;top:685.0px;letter-spacing:0.023px">run.fuel.fuel_recharge_rate.ledge * Card.equipment_db.effect_curr_value</span>
<span class="x t" style="left:620.8px;top:708.0px;letter-spacing:0.082px">Change the variable</span>
<span class="x v" style="left:773.7px;top:708.0px;letter-spacing:-0.165px">Fuel.FuelRechargeRate.Running</span>
<span class="x t" style="left:986.3px;top:708.0px;letter-spacing:0.636px">of</span>
<span class="x obj" style="left:1022.5px;top:708.0px;letter-spacing:-0.379px">Player</span>
<span class="x tb" style="left:1065.7px;top:708.0px;letter-spacing:0.000px">:</span>
<span class="x op" style="left:1075.6px;top:708.0px;letter-spacing:0.036px">add</span>
<span class="x n" style="left:1107.0px;top:708.0px;letter-spacing:0.074px">run.fuel.fuel_recharge_rate.running *</span>
<span class="x n" style="left:603.9px;top:728.0px;letter-spacing:0.006px">Card.equipment_db.effect_curr_value</span>
<span class="x t" style="left:620.8px;top:751.0px;letter-spacing:0.082px">Change the variable</span>
<span class="x v" style="left:773.7px;top:751.0px;letter-spacing:-0.203px">Fuel.FuelRechargeRate.Idle</span>
<span class="x t" style="left:955.2px;top:751.0px;letter-spacing:0.636px">of</span>
<span class="x obj" style="left:991.4px;top:751.0px;letter-spacing:-0.379px">Player</span>
<span class="x tb" style="left:1034.6px;top:751.0px;letter-spacing:0.000px">:</span>
<span class="x op" style="left:1044.5px;top:751.0px;letter-spacing:0.036px">add</span>
<span class="x n" style="left:1075.9px;top:751.0px;letter-spacing:0.032px">run.fuel.fuel_recharge_rate.idle * Card.equipment_db.effect_curr_value</span>
<span class="x add" style="left:602.6px;top:773.0px;letter-spacing:0.360px">Add action</span>
<span class="x t" style="left:142.7px;top:797.0px;letter-spacing:0.061px">The variable</span>
<span class="x v" style="left:244.8px;top:797.0px;letter-spacing:0.106px">DBLookupID</span>
<span class="x t" style="left:333.3px;top:797.0px;letter-spacing:0.836px">of</span>
<span class="x obj" style="left:369.1px;top:797.0px;letter-spacing:-0.326px">Card</span>
<span class="x o" style="left:408.4px;top:797.0px;letter-spacing:0.000px">=</span>
<span class="x s" style="left:424.8px;top:797.0px;letter-spacing:0.085px">&quot;lean_burn&quot;</span>
<span class="x add" style="left:125.0px;top:819.0px;letter-spacing:0.516px">Add condition</span>
<span class="x t" style="left:620.8px;top:796.0px;letter-spacing:0.082px">Change the variable</span>
<span class="x v" style="left:773.7px;top:796.0px;letter-spacing:-0.233px">Fuel.FuelBurnRate</span>
<span class="x t" style="left:896.9px;top:796.0px;letter-spacing:0.636px">of</span>
<span class="x obj" style="left:933.1px;top:796.0px;letter-spacing:-0.379px">Player</span>
<span class="x tb" style="left:976.2px;top:796.0px;letter-spacing:0.000px">:</span>
<span class="x op" style="left:986.2px;top:796.0px;letter-spacing:0.036px">add</span>
<span class="x n" style="left:1017.6px;top:796.0px;letter-spacing:0.050px">run.fuel.fuel_burn_rate * Card.equipment_db.effect_curr_value</span>
<span class="x add" style="left:602.6px;top:818.0px;letter-spacing:0.360px">Add action</span>
<span class="x t" style="left:142.7px;top:844.0px;letter-spacing:0.061px">The variable</span>
<span class="x v" style="left:244.8px;top:844.0px;letter-spacing:0.106px">DBLookupID</span>
<span class="x t" style="left:333.3px;top:844.0px;letter-spacing:0.836px">of</span>
<span class="x obj" style="left:369.1px;top:844.0px;letter-spacing:-0.326px">Card</span>
<span class="x o" style="left:408.4px;top:844.0px;letter-spacing:0.000px">=</span>
<span class="x s" style="left:424.8px;top:844.0px;letter-spacing:0.080px">&quot;sipping_gas&quot;</span>
<span class="x add" style="left:125.0px;top:866.0px;letter-spacing:0.516px">Add condition</span>
<span class="x t" style="left:620.8px;top:843.0px;letter-spacing:0.082px">Change the variable</span>
<span class="x v" style="left:773.7px;top:843.0px;letter-spacing:-0.233px">Fuel.FuelBurnRate</span>
<span class="x t" style="left:896.9px;top:843.0px;letter-spacing:0.636px">of</span>
<span class="x obj" style="left:933.1px;top:843.0px;letter-spacing:-0.379px">Player</span>
<span class="x tb" style="left:976.2px;top:843.0px;letter-spacing:0.000px">:</span>
<span class="x op" style="left:986.2px;top:843.0px;letter-spacing:0.036px">add</span>
<span class="x n" style="left:1017.6px;top:843.0px;letter-spacing:0.050px">run.fuel.fuel_burn_rate * Card.equipment_db.effect_curr_value</span>
<span class="x add" style="left:602.6px;top:865.0px;letter-spacing:0.360px">Add action</span>
<span class="x t" style="left:142.7px;top:891.0px;letter-spacing:0.061px">The variable</span>
<span class="x v" style="left:244.8px;top:891.0px;letter-spacing:0.106px">DBLookupID</span>
<span class="x t" style="left:333.3px;top:891.0px;letter-spacing:0.836px">of</span>
<span class="x obj" style="left:369.1px;top:891.0px;letter-spacing:-0.326px">Card</span>
<span class="x o" style="left:408.4px;top:891.0px;letter-spacing:0.000px">=</span>
<span class="x s" style="left:424.8px;top:891.0px;letter-spacing:-0.036px">&quot;reserve_tank&quot;</span>
<span class="x add" style="left:125.0px;top:913.0px;letter-spacing:0.516px">Add condition</span>
<span class="x t" style="left:620.8px;top:890.0px;letter-spacing:0.082px">Change the variable</span>
<span class="x v" style="left:773.7px;top:890.0px;letter-spacing:-0.138px">Fuel.MaxFuel</span>
<span class="x t" style="left:865.1px;top:890.0px;letter-spacing:0.636px">of</span>
<span class="x obj" style="left:901.3px;top:890.0px;letter-spacing:-0.379px">Player</span>
<span class="x tb" style="left:944.4px;top:890.0px;letter-spacing:0.000px">:</span>
<span class="x op" style="left:954.4px;top:890.0px;letter-spacing:0.036px">add</span>
<span class="x n" style="left:985.8px;top:890.0px;letter-spacing:0.033px">run.fuel.max_fuel * Card.equipment_db.effect_curr_value</span>
<span class="x add" style="left:602.6px;top:912.0px;letter-spacing:0.360px">Add action</span>
<span class="x t" style="left:142.7px;top:938.0px;letter-spacing:0.061px">The variable</span>
<span class="x v" style="left:244.8px;top:938.0px;letter-spacing:0.106px">DBLookupID</span>
<span class="x t" style="left:333.3px;top:938.0px;letter-spacing:0.836px">of</span>
<span class="x obj" style="left:369.1px;top:938.0px;letter-spacing:-0.326px">Card</span>
<span class="x o" style="left:408.4px;top:938.0px;letter-spacing:0.000px">=</span>
<span class="x s" style="left:424.8px;top:938.0px;letter-spacing:-0.009px">&quot;fuel_cells&quot;</span>
<span class="x add" style="left:125.0px;top:960.0px;letter-spacing:0.516px">Add condition</span>
<span class="x t" style="left:620.8px;top:937.0px;letter-spacing:0.082px">Change the variable</span>
<span class="x v" style="left:773.7px;top:937.0px;letter-spacing:-0.138px">Fuel.MaxFuel</span>
<span class="x t" style="left:865.1px;top:937.0px;letter-spacing:0.636px">of</span>
<span class="x obj" style="left:901.3px;top:937.0px;letter-spacing:-0.379px">Player</span>
<span class="x tb" style="left:944.4px;top:937.0px;letter-spacing:0.000px">:</span>
<span class="x op" style="left:954.4px;top:937.0px;letter-spacing:0.036px">add</span>
<span class="x n" style="left:985.8px;top:937.0px;letter-spacing:0.033px">run.fuel.max_fuel * Card.equipment_db.effect_curr_value</span>
<span class="x add" style="left:602.6px;top:959.0px;letter-spacing:0.360px">Add action</span>
<span class="x grp" style="left:58.8px;top:988.0px;letter-spacing:-0.042px">End of Room</span>
<span class="x t" style="left:98.7px;top:1023.0px;letter-spacing:0.061px">The variable</span>
<span class="x v" style="left:201.0px;top:1023.0px;letter-spacing:0.309px">eventq[0]</span>
<span class="x o" style="left:270.4px;top:1023.0px;letter-spacing:0.000px">=</span>
<span class="x s" style="left:286.3px;top:1023.0px;letter-spacing:0.373px">&quot;room_complete&quot;</span>
<span class="x add" style="left:81.0px;top:1045.0px;letter-spacing:0.516px">Add condition</span>
<span class="x t" style="left:619.9px;top:1022.0px;letter-spacing:-0.009px">Log message</span>
<span class="x s" style="left:712.5px;top:1022.0px;letter-spacing:0.181px">&quot;Event trigger: &quot;</span>
<span class="x s" style="left:822.0px;top:1022.0px;letter-spacing:0.000px">+</span>
<span class="x s" style="left:834.8px;top:1022.0px;letter-spacing:0.421px">eventq[0]</span>
<span class="x t" style="left:902.0px;top:1022.0px;letter-spacing:0.423px">of type</span>
<span class="x t" style="left:955.0px;top:1022.0px;letter-spacing:0.361px">to the console in group</span>
<span class="x add" style="left:602.6px;top:1044.0px;letter-spacing:0.360px">Add action</span>
<span class="x hd" style="left:96.8px;top:1068.0px;letter-spacing:0.069px">Repeat for each instance of</span>
<span class="x obj" style="left:297.9px;top:1068.0px;letter-spacing:-0.293px">Card</span>
<span class="x hd" style="left:333.4px;top:1068.0px;letter-spacing:0.000px">:</span>
<span class="x t" style="left:120.7px;top:1090.0px;letter-spacing:0.061px">The variable</span>
<span class="x v" style="left:223.0px;top:1090.0px;letter-spacing:-0.521px">Area</span>
<span class="x t" style="left:258.8px;top:1090.0px;letter-spacing:0.836px">of</span>
<span class="x obj" style="left:294.6px;top:1090.0px;letter-spacing:-0.326px">Card</span>
<span class="x o" style="left:333.9px;top:1090.0px;letter-spacing:0.000px">=</span>
<span class="x s" style="left:349.2px;top:1090.0px;letter-spacing:-0.237px">&quot;Rack&quot;</span>
<span class="x add" style="left:103.0px;top:1112.0px;letter-spacing:0.516px">Add condition</span>
<span class="x add" style="left:602.6px;top:1088.0px;letter-spacing:0.360px">Add action</span>
<span class="x t" style="left:142.7px;top:1137.0px;letter-spacing:0.061px">The variable</span>
<span class="x v" style="left:244.8px;top:1137.0px;letter-spacing:0.106px">DBLookupID</span>
<span class="x t" style="left:333.3px;top:1137.0px;letter-spacing:0.836px">of</span>
<span class="x obj" style="left:369.1px;top:1137.0px;letter-spacing:-0.326px">Card</span>
<span class="x o" style="left:408.4px;top:1137.0px;letter-spacing:0.000px">=</span>
<span class="x s" style="left:424.8px;top:1137.0px;letter-spacing:0.100px">&quot;energy_recapture&quot;</span>
<span class="x add" style="left:125.0px;top:1159.0px;letter-spacing:0.516px">Add condition</span>
<span class="x t" style="left:620.8px;top:1136.0px;letter-spacing:0.082px">Change the variable</span>
<span class="x v" style="left:774.7px;top:1136.0px;letter-spacing:0.194px">equipment_db.additional_value</span>
<span class="x t" style="left:986.1px;top:1136.0px;letter-spacing:0.636px">of</span>
<span class="x obj" style="left:1022.0px;top:1136.0px;letter-spacing:-0.293px">Card</span>
<span class="x tb" style="left:1053.8px;top:1136.0px;letter-spacing:0.000px">:</span>
<span class="x op" style="left:1063.7px;top:1136.0px;letter-spacing:0.186px">add</span>
<span class="x n" style="left:1094.5px;top:1136.0px;letter-spacing:0.024px">Card.equipment_db.effect_curr_value</span>
<span class="x add" style="left:602.6px;top:1158.0px;letter-spacing:0.360px">Add action</span>
</div></body></html>
